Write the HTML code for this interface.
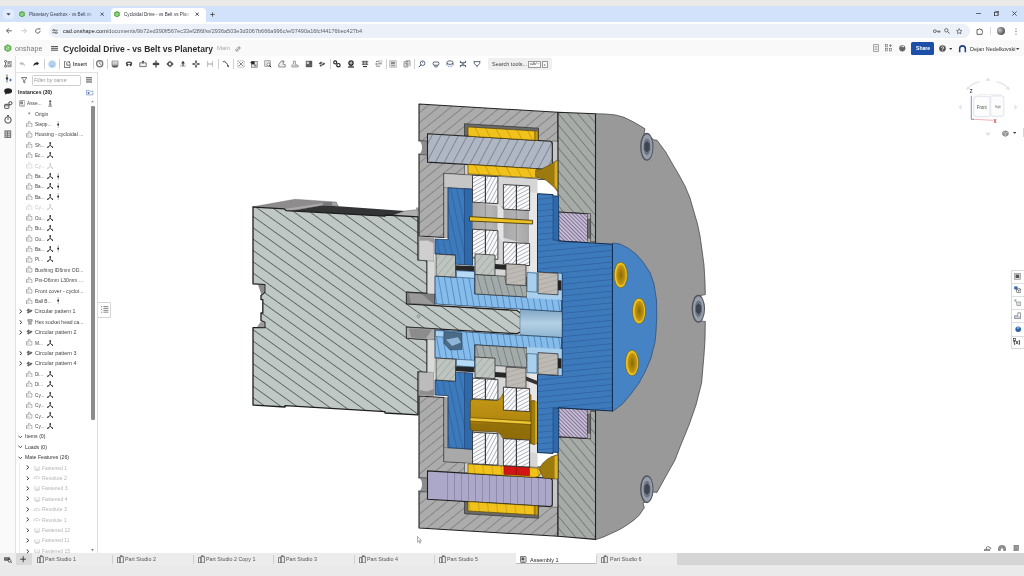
<!DOCTYPE html>
<html><head><meta charset="utf-8">
<style>
*{margin:0;padding:0;box-sizing:border-box}
html,body{width:1024px;height:576px;overflow:hidden;background:#fff;font-family:"Liberation Sans",sans-serif;}
.a{position:absolute}
.t{position:absolute;white-space:nowrap;line-height:1;transform-origin:0 0}
#topstrip{left:0;top:0;width:1024px;height:6px;background:#e4e2df}
#tabstrip{left:0;top:6px;width:1024px;height:16px;background:#d3e2fb}
#addr{left:0;top:22px;width:1024px;height:18px;background:#fff}
#pill{left:49px;top:24px;width:921px;height:14px;border-radius:7px;background:#ebf0f9}
#hdr{left:0;top:40px;width:1024px;height:16px;background:#f7f7f7}
#tool{left:0;top:56px;width:1024px;height:16px;background:#fff}
#side{left:16px;top:72px;width:82px;height:481px;background:#fff;border-right:1px solid #e4e4e4}
#leftcol{left:0;top:56px;width:16px;height:497px;background:#fafafa;border-right:1px solid #e6e6e6}
#bottabs{left:0;top:553px;width:1024px;height:13px;background:#ececec}
#botbar{left:0;top:566px;width:1024px;height:10px;background:#e9e9e9}
.row{position:absolute;left:0;font-size:5.4px;color:#333;white-space:nowrap;line-height:1}
.g{color:#b8b8b8}
</style></head><body>
<div id="canvas" class="a" style="left:0;top:0;width:1024px;height:576px"><svg class="a" style="left:0;top:0" width="1024" height="576" viewBox="0 0 1024 576"><defs><pattern id="hHous" width="7.8" height="7.8" patternUnits="userSpaceOnUse" patternTransform="rotate(-39)"><rect width="7.8" height="7.8" fill="#acacac"/><line x1="0" y1="0" x2="7.8" y2="0" stroke="#6c6c6c" stroke-width="1.2"/></pattern><pattern id="hCov" width="7.4" height="7.4" patternUnits="userSpaceOnUse" patternTransform="rotate(50)"><rect width="7.4" height="7.4" fill="#a7aba8"/><line x1="0" y1="0" x2="7.4" y2="0" stroke="#505450" stroke-width="1.0"/></pattern><pattern id="hMot" width="9.2" height="9.2" patternUnits="userSpaceOnUse" patternTransform="rotate(35.7)"><rect width="9.2" height="9.2" fill="#bfc8c4"/><line x1="0" y1="0" x2="9.2" y2="0" stroke="#565c58" stroke-width="1.7"/></pattern><pattern id="hBlue" width="5.8" height="5.8" patternUnits="userSpaceOnUse" patternTransform="rotate(-5.5)"><rect width="5.8" height="5.8" fill="#3d7abc"/><line x1="0" y1="0" x2="5.8" y2="0" stroke="#24508a" stroke-width="0.9"/></pattern><pattern id="hBlueL" width="6.0" height="6.0" patternUnits="userSpaceOnUse" patternTransform="rotate(78)"><rect width="6.0" height="6.0" fill="#3d7abc"/><line x1="0" y1="0" x2="6.0" y2="0" stroke="#24508a" stroke-width="0.9"/></pattern><pattern id="hLB" width="6.0" height="6.0" patternUnits="userSpaceOnUse" patternTransform="rotate(80)"><rect width="6.0" height="6.0" fill="#86bcec"/><line x1="0" y1="0" x2="6.0" y2="0" stroke="#2f6496" stroke-width="1.0"/></pattern><pattern id="hDa" width="3.4" height="3.4" patternUnits="userSpaceOnUse" patternTransform="rotate(-30)"><rect width="3.4" height="3.4" fill="#fafafa"/><line x1="0" y1="0" x2="3.4" y2="0" stroke="#8890a0" stroke-width="1.2"/></pattern><pattern id="hDb" width="3.4" height="3.4" patternUnits="userSpaceOnUse" patternTransform="rotate(-62)"><rect width="3.4" height="3.4" fill="#fafafa"/><line x1="0" y1="0" x2="3.4" y2="0" stroke="#8890a0" stroke-width="1.2"/></pattern><pattern id="hDc" width="3.4" height="3.4" patternUnits="userSpaceOnUse" patternTransform="rotate(-47)"><rect width="3.4" height="3.4" fill="#fafafa"/><line x1="0" y1="0" x2="3.4" y2="0" stroke="#8890a0" stroke-width="1.2"/></pattern><pattern id="hDd" width="3.4" height="3.4" patternUnits="userSpaceOnUse" patternTransform="rotate(-28)"><rect width="3.4" height="3.4" fill="#fafafa"/><line x1="0" y1="0" x2="3.4" y2="0" stroke="#8890a0" stroke-width="1.2"/></pattern><pattern id="hDisc" width="3.1" height="3.1" patternUnits="userSpaceOnUse" patternTransform="rotate(-62)"><rect width="3.1" height="3.1" fill="#f8f8fa"/><line x1="0" y1="0" x2="3.1" y2="0" stroke="#4a5468" stroke-width="1.0"/></pattern><pattern id="hDisc2" width="3.1" height="3.1" patternUnits="userSpaceOnUse" patternTransform="rotate(-48)"><rect width="3.1" height="3.1" fill="#f8f8fa"/><line x1="0" y1="0" x2="3.1" y2="0" stroke="#4a5468" stroke-width="1.0"/></pattern><pattern id="hPinU" width="7.8" height="7.8" patternUnits="userSpaceOnUse" patternTransform="rotate(-62)"><rect width="7.8" height="7.8" fill="#afb7c5"/><line x1="0" y1="0" x2="7.8" y2="0" stroke="#505868" stroke-width="1.0"/></pattern><pattern id="hPinL" width="7.0" height="7.0" patternUnits="userSpaceOnUse" patternTransform="rotate(90)"><rect width="7.0" height="7.0" fill="#aba8c9"/><line x1="0" y1="0" x2="7.0" y2="0" stroke="#6a6890" stroke-width="0.9"/></pattern><pattern id="hYel" width="9.0" height="9.0" patternUnits="userSpaceOnUse" patternTransform="rotate(62)"><rect width="9.0" height="9.0" fill="#f2c21c"/><line x1="0" y1="0" x2="9.0" y2="0" stroke="#a07c08" stroke-width="0.9"/></pattern><pattern id="hYelL" width="9.0" height="9.0" patternUnits="userSpaceOnUse" patternTransform="rotate(83)"><rect width="9.0" height="9.0" fill="#f2c21c"/><line x1="0" y1="0" x2="9.0" y2="0" stroke="#a88408" stroke-width="0.9"/></pattern><pattern id="hBear" width="2.7" height="2.7" patternUnits="userSpaceOnUse" patternTransform="rotate(45)"><rect width="2.7" height="2.7" fill="#cac0d8"/><line x1="0" y1="0" x2="2.7" y2="0" stroke="#807294" stroke-width="2.0"/></pattern><pattern id="hEcc" width="6.5" height="6.5" patternUnits="userSpaceOnUse" patternTransform="rotate(75)"><rect width="6.5" height="6.5" fill="#a3abaa"/><line x1="0" y1="0" x2="6.5" y2="0" stroke="#505858" stroke-width="0.9"/></pattern><pattern id="hBrg" width="5.5" height="5.5" patternUnits="userSpaceOnUse" patternTransform="rotate(-50)"><rect width="5.5" height="5.5" fill="#bec5c1"/><line x1="0" y1="0" x2="5.5" y2="0" stroke="#868c88" stroke-width="0.8"/></pattern><pattern id="hBrg2" width="4.5" height="4.5" patternUnits="userSpaceOnUse" patternTransform="rotate(-15)"><rect width="4.5" height="4.5" fill="#bebab6"/><line x1="0" y1="0" x2="4.5" y2="0" stroke="#8a8884" stroke-width="0.6"/></pattern><linearGradient id="gGold" x1="0" y1="0" x2="0" y2="1"><stop offset="0" stop-color="#c49a16"/><stop offset="0.35" stop-color="#ba8e12"/><stop offset="0.54" stop-color="#b0860e"/><stop offset="0.62" stop-color="#94700a"/><stop offset="1" stop-color="#8c6a08"/></linearGradient><linearGradient id="gBore" x1="0" y1="0" x2="0" y2="1"><stop offset="0" stop-color="#7fa6c4"/><stop offset="0.5" stop-color="#b4d0e4"/><stop offset="1" stop-color="#8fb4d0"/></linearGradient><linearGradient id="gRoll" x1="0" y1="0" x2="1" y2="0"><stop offset="0" stop-color="#a6a6a6"/><stop offset="0.3" stop-color="#b6b6b6"/><stop offset="0.5" stop-color="#a4a4a4"/><stop offset="0.8" stop-color="#b4b4b4"/><stop offset="1" stop-color="#a6a6a6"/></linearGradient><radialGradient id="gHole" cx="0.5" cy="0.5" r="0.6"><stop offset="0" stop-color="#8a6a08"/><stop offset="0.7" stop-color="#c09410"/><stop offset="1" stop-color="#e0b020"/></radialGradient></defs><polygon points="595.5,113.7 605.0,114.0 615.4,114.9 624.0,117.3 633.6,122.0 640.5,126.0 644.9,128.7 644.0,134.0 650.0,136.0 653.5,139.8 657.0,140.2 665.7,152.0 672.0,163.0 679.0,175.0 685.0,186.0 690.0,198.0 694.0,212.0 697.5,224.0 700.0,236.0 702.0,250.0 704.0,265.0 705.0,282.0 705.3,294.6 700.0,295.6 700.0,321.0 705.3,321.4 705.0,340.0 704.0,355.0 701.6,383.0 696.0,405.0 689.0,425.0 680.0,447.0 675.0,460.0 666.0,476.0 657.0,492.4 653.0,492.0 650.0,500.0 643.0,503.0 644.3,507.7 639.0,515.5 634.0,520.0 628.5,524.0 622.8,527.7 617.0,530.8 610.5,533.8 603.0,537.2 595.5,539.6" fill="#999999" stroke="#3a3a3a" stroke-width="0.7" stroke-linejoin="round"/>
<ellipse cx="646.8" cy="146.8" rx="6.7" ry="14" fill="#4e525a"/>
<ellipse cx="647.0" cy="146.8" rx="5.5" ry="12.5" fill="#989faa"/>
<ellipse cx="647.0" cy="146.8" rx="3.6" ry="8.4" fill="#6c7382"/>
<polygon points="644.4,143.8 647.0,141.2 649.6,143.8 649.6,149.8 647.0,152.4 644.4,149.8" fill="#3e4450"/>
<ellipse cx="698.3" cy="308.8" rx="6.7" ry="14" fill="#4e525a"/>
<ellipse cx="698.5" cy="308.8" rx="5.5" ry="12.5" fill="#989faa"/>
<ellipse cx="698.5" cy="308.8" rx="3.6" ry="8.4" fill="#6c7382"/>
<polygon points="695.9,305.8 698.5,303.2 701.1,305.8 701.1,311.8 698.5,314.4 695.9,311.8" fill="#3e4450"/>
<ellipse cx="646.8" cy="489.2" rx="6.7" ry="14" fill="#4e525a"/>
<ellipse cx="647.0" cy="489.2" rx="5.5" ry="12.5" fill="#989faa"/>
<ellipse cx="647.0" cy="489.2" rx="3.6" ry="8.4" fill="#6c7382"/>
<polygon points="644.4,486.2 647.0,483.6 649.6,486.2 649.6,492.2 647.0,494.8 644.4,492.2" fill="#3e4450"/>
<polygon points="612.4,243.0 620.0,244.0 628.0,248.0 636.0,254.0 643.0,262.0 650.0,272.5 654.0,284.0 656.5,300.0 656.8,316.0 656.0,332.0 655.0,342.0 651.0,358.0 645.0,372.0 639.0,383.0 631.0,394.0 622.5,404.0 612.4,411.6" fill="#4683c4" stroke="#1c3c68" stroke-width="0.6"/>
<ellipse cx="620.7" cy="275.0" rx="6.6" ry="12.8" fill="#f0c41c" stroke="#5a4806" stroke-width="0.5"/>
<ellipse cx="621.0" cy="275.0" rx="4.9" ry="10.6" fill="url(#gHole)"/>
<ellipse cx="639.0" cy="311.0" rx="6.6" ry="12.8" fill="#f0c41c" stroke="#5a4806" stroke-width="0.5"/>
<ellipse cx="639.3" cy="311.0" rx="4.9" ry="10.6" fill="url(#gHole)"/>
<ellipse cx="632.0" cy="363.0" rx="6.6" ry="12.8" fill="#f0c41c" stroke="#5a4806" stroke-width="0.5"/>
<ellipse cx="632.3" cy="363.0" rx="4.9" ry="10.6" fill="url(#gHole)"/>
<polygon points="252.3,206.9 295,199.2 336.2,202 338.3,206.1 322,205.6 288,211.2 284.1,209.3" fill="#8e8c8c" stroke="#555" stroke-width="0.3"/>
<polygon points="285.7,208.8 321.6,203.5 323.2,205.1 287.8,210.8" fill="#acaaaa"/>
<polygon points="323.2,202.2 336.2,202 338.3,206.1 323.4,205.6" fill="#787878"/>
<polygon points="332,202.6 336.2,202.4 338,205.8 332.4,205.6" fill="#a6a6a6"/>
<polygon points="288.8,211.3 322.1,205.6 338.5,206.2 405,211 386,217.8 380,217.4" fill="#333435"/>
<polygon points="386,217.8 405,211 418,209.6 418,217.8" fill="#b0b0b0" stroke="#444" stroke-width="0.4"/>
<polygon points="416,207.5 419,207.5 419,211 416,211" fill="#a0a0a0"/>
<polygon points="253.0,207.0 284.3,208.9 286.0,210.6 385.0,216.2 386.0,215.0 418.0,216.9 418.0,259.9 427.0,260.5 427.0,293.5 406.5,292.2 406.5,303.8 517.0,310.4 520.5,313.1 522.0,318.2 522.0,327.2 520.5,332.1 517.0,333.7 406.5,327.1 406.5,338.2 427.0,339.5 427.0,372.5 418.0,371.9 418.0,414.9 385.0,413.0 385.0,411.6 285.0,405.6 285.0,407.0 253.0,405.0 253.0,327.6 264.8,327.7 264.8,322.4 261.0,320.5 261.0,312.9 262.8,313.0 262.8,299.6 261.0,299.5 261.0,295.5 264.8,292.2 264.8,284.6 253.0,283.9" fill="url(#hMot)" stroke="#1e1e1e" stroke-width="1.3" stroke-linejoin="round" />
<polygon points="258.0,284.7 264.4,285.1 264.4,291.9 261.4,294.5" fill="#8a8a8a" stroke="none" stroke-width="0.6" stroke-linejoin="round" />
<polygon points="261.2,321.1 264.4,322.7 264.4,327.3 257.0,327.1" fill="#9a9a9a" stroke="none" stroke-width="0.6" stroke-linejoin="round" />
<polygon points="406.5,292.2 435.0,294.0 435.0,305.3 406.5,303.6" fill="#7c7c7c" stroke="#222" stroke-width="0.5" stroke-linejoin="round" />
<polygon points="409.0,293.4 422.0,294.2 434.0,304.4 411.0,303.0" fill="#9a9a9a" stroke="none" stroke-width="0.6" stroke-linejoin="round" />
<polygon points="406.5,327.2 435.0,329.0 435.0,340.0 406.5,338.2" fill="#aeaeae" stroke="#222" stroke-width="0.5" stroke-linejoin="round" />
<polygon points="409.0,328.4 432.0,329.8 426.0,338.4 411.0,337.5" fill="#8c8c8c" stroke="none" stroke-width="0.6" stroke-linejoin="round" />
<circle cx="418.5" cy="316.4" r="1.4" fill="none" stroke="#444" stroke-width="0.4"/>
<polygon points="419.0,104.0 558.0,112.3 558.0,180.3 444.0,173.5 444.0,237.5 419.0,236.0" fill="url(#hHous)" stroke="#222" stroke-width="1.1" stroke-linejoin="round" />
<polygon points="419.0,140.5 427.5,141.0 427.5,155.0 419.0,154.5" fill="#8c8c8c" stroke="#222" stroke-width="0.5" stroke-linejoin="round" />
<polygon points="464.5,123.7 538.5,128.2 538.5,140.7 464.5,136.2" fill="#6a6a6a" stroke="#222" stroke-width="0.6" stroke-linejoin="round" />
<polygon points="464.5,164.2 558.0,169.8 558.0,180.3 464.5,174.7" fill="#cfcfcf" stroke="#222" stroke-width="0.5" stroke-linejoin="round" />
<polygon points="552.0,141.0 558.0,141.3 558.0,169.8 552.0,169.5" fill="#c6c6c6" stroke="#222" stroke-width="0.4" stroke-linejoin="round" />
<polygon points="444.0,173.5 472.5,175.2 472.5,189.2 444.0,187.5" fill="#c6c6c6" stroke="#555" stroke-width="0.4" stroke-linejoin="round" />
<polygon points="444.0,187.5 448.0,187.7 448.0,237.7 444.0,237.5" fill="#b4b4b4" stroke="#555" stroke-width="0.4" stroke-linejoin="round" />
<polygon points="419.0,528.0 558.0,536.3 558.0,468.3 444.0,461.5 444.0,397.5 419.0,396.0" fill="url(#hHous)" stroke="#222" stroke-width="1.1" stroke-linejoin="round" />
<polygon points="419.0,491.5 427.5,492.0 427.5,478.0 419.0,477.5" fill="#8c8c8c" stroke="#222" stroke-width="0.5" stroke-linejoin="round" />
<polygon points="464.5,513.7 538.5,518.2 538.5,505.7 464.5,501.2" fill="#6a6a6a" stroke="#222" stroke-width="0.6" stroke-linejoin="round" />
<polygon points="464.5,473.2 558.0,478.8 558.0,468.3 464.5,462.7" fill="#cfcfcf" stroke="#222" stroke-width="0.5" stroke-linejoin="round" />
<polygon points="552.0,507.0 558.0,507.3 558.0,478.8 552.0,478.5" fill="#c6c6c6" stroke="#222" stroke-width="0.4" stroke-linejoin="round" />
<polygon points="444.0,461.5 472.5,463.2 472.5,449.2 444.0,447.5" fill="#a9a9a9" stroke="#555" stroke-width="0.4" stroke-linejoin="round" />
<polygon points="444.0,447.5 448.0,447.7 448.0,397.7 444.0,397.5" fill="#a2a2a2" stroke="#555" stroke-width="0.4" stroke-linejoin="round" />
<ellipse cx="418.8" cy="147.5" rx="3.2" ry="6.2" fill="#fff"/>
<ellipse cx="418.8" cy="484.5" rx="3.2" ry="6.2" fill="#fff"/>
<polygon points="419.0,237.0 434.0,237.9 434.0,261.4 427.0,261.0 427.0,260.5 419.0,260.0" fill="#cfcfcf" stroke="#555" stroke-width="0.4" stroke-linejoin="round" />
<polygon points="419.0,395.0 434.0,395.9 434.0,372.4 427.0,372.0 427.0,372.5 419.0,372.0" fill="#bcbcbc" stroke="#555" stroke-width="0.4" stroke-linejoin="round" />
<polygon points="419.4,237.3 434.0,238.2 434.0,243.4 428.0,240.5 419.4,240.8" fill="#9c9c9c" stroke="none" stroke-width="0.6" stroke-linejoin="round" />
<polygon points="419.4,394.7 434.0,395.6 434.0,388.9 427.0,391.5 419.4,390.0" fill="#8e8e8e" stroke="none" stroke-width="0.6" stroke-linejoin="round" />
<polygon points="427.5,261.0 434.5,261.4 434.5,293.9 427.5,293.5" fill="#d9d9d9" stroke="#777" stroke-width="0.3" stroke-linejoin="round" />
<polygon points="427.5,372.0 434.5,372.4 434.5,339.9 427.5,339.5" fill="#d9d9d9" stroke="#777" stroke-width="0.3" stroke-linejoin="round" />
<polygon points="558.0,112.3 595.5,113.8 595.5,242.1 590.5,241.8 590.5,214.0 558.0,212.0" fill="url(#hCov)" stroke="#222" stroke-width="1.1" stroke-linejoin="round" />
<polygon points="558.7,212.1 587.5,213.8 587.5,242.7 558.7,241.0" fill="url(#hBear)" stroke="#222" stroke-width="0.9" stroke-linejoin="round" />
<polygon points="587.5,213.8 590.5,214.0 590.5,242.9 587.5,242.7" fill="#a7aba8" stroke="none" stroke-width="0.6" stroke-linejoin="round" />
<polygon points="587.5,219.1 590.5,219.3 590.5,238.3 587.5,238.1" fill="#6c6c6c" stroke="#222" stroke-width="0.4" stroke-linejoin="round" />
<polygon points="558.0,536.3 595.5,539.4 595.5,411.1 590.5,410.8 590.5,438.6 558.0,436.6" fill="url(#hCov)" stroke="#222" stroke-width="1.1" stroke-linejoin="round" />
<polygon points="558.7,436.7 587.5,438.4 587.5,409.5 558.7,407.8" fill="url(#hBear)" stroke="#222" stroke-width="0.9" stroke-linejoin="round" />
<polygon points="587.5,438.4 590.5,438.6 590.5,409.7 587.5,409.5" fill="#a7aba8" stroke="none" stroke-width="0.6" stroke-linejoin="round" />
<polygon points="587.5,433.1 590.5,433.3 590.5,414.3 587.5,414.1" fill="#6c6c6c" stroke="#222" stroke-width="0.4" stroke-linejoin="round" />
<polygon points="472.5,175.2 537.5,179.1 537.5,279.1 472.5,275.2" fill="#d6d6d6" stroke="none" stroke-width="0.6" stroke-linejoin="round" />
<polygon points="472.5,463.2 537.5,467.1 537.5,367.1 472.5,363.2" fill="#d6d6d6" stroke="none" stroke-width="0.6" stroke-linejoin="round" />
<polygon points="529.0,192.6 537.5,193.1 537.5,279.1 529.0,278.6" fill="#e6e6e6" stroke="none" stroke-width="0.6" stroke-linejoin="round" />
<polygon points="529.0,452.6 537.5,453.1 537.5,367.1 529.0,366.6" fill="#e6e6e6" stroke="none" stroke-width="0.6" stroke-linejoin="round" />
<polygon points="537.5,193.7 553.0,194.6 553.0,196.0 558.0,196.3 558.0,240.9 612.4,244.2 612.4,411.0 558.0,407.7 558.0,452.3 553.0,452.0 553.0,453.4 537.5,452.5 537.5,374.1 562.0,375.6 562.0,273.6 537.5,272.1" fill="url(#hBlue)" stroke="#10294a" stroke-width="1.0" stroke-linejoin="round" />
<polygon points="553.0,196.0 558.6,196.4 558.6,240.4 553.0,240.0" fill="#2f69aa" stroke="#10294a" stroke-width="0.4" stroke-linejoin="round" />
<polygon points="553.0,452.0 558.6,452.4 558.6,408.4 553.0,408.0" fill="#2f69aa" stroke="#10294a" stroke-width="0.4" stroke-linejoin="round" />
<polygon points="427.5,133.8 550.5,141.2 552.3,143.0 552.3,168.0 550.5,169.5 427.5,162.1" fill="url(#hPinU)" stroke="#222" stroke-width="1.1" stroke-linejoin="round" />
<polygon points="427.5,499.2 550.5,506.6 552.3,505.0 552.3,480.0 550.5,478.3 427.5,470.9" fill="url(#hPinL)" stroke="#222" stroke-width="1.1" stroke-linejoin="round" />
<polygon points="468.0,126.9 535.0,131.0 535.0,140.3 468.0,136.2" fill="url(#hYel)" stroke="#4a3a04" stroke-width="0.6" stroke-linejoin="round" />
<polygon points="535.0,131.0 538.0,131.1 538.0,140.4 535.0,140.3" fill="#c79a10" stroke="#4a3a04" stroke-width="0.4" stroke-linejoin="round" />
<polygon points="468.0,164.5 535.0,168.6 539.0,170.2 541.0,174.3 538.0,178.1 468.0,173.9" fill="url(#hYel)" stroke="#4a3a04" stroke-width="0.6" stroke-linejoin="round" />
<polygon points="468.0,510.9 535.0,515.0 535.0,505.7 468.0,501.6" fill="url(#hYelL)" stroke="#4a3a04" stroke-width="0.6" stroke-linejoin="round" />
<polygon points="535.0,515.0 538.0,515.1 538.0,505.8 535.0,505.7" fill="#c79a10" stroke="#4a3a04" stroke-width="0.4" stroke-linejoin="round" />
<polygon points="468.0,473.3 535.0,477.4 539.0,476.2 541.0,472.3 538.0,468.1 468.0,463.9" fill="url(#hYelL)" stroke="#4a3a04" stroke-width="0.6" stroke-linejoin="round" />
<polygon points="535.6,170.5 540.8,169.3 549.0,165.3 557.6,160.1 557.6,191.7 554.4,187.5 546.0,180.2 535.6,176.5" fill="#9c7a10" stroke="#4a3a04" stroke-width="0.5" stroke-linejoin="round" />
<polygon points="554.6,162.6 557.4,160.7 557.4,189.3 554.6,185.6" fill="#d8b024" stroke="none" stroke-width="0.6" stroke-linejoin="round" />
<path d="M558 454.6 Q546 457 539.3 468.1 L541 473 L543.5 478 L558 479 Z" fill="#9c7a10" stroke="#4a3a04" stroke-width="0.5"/>
<path d="M557.6 455.2 L554.6 456.4 L554.6 478.4 L557.6 478.6 Z" fill="#dcb428"/>
<polygon points="503.9,465.9 516.4,466.6 516.4,475.0 503.9,474.3" fill="#d41414" stroke="#6a0808" stroke-width="0.5" stroke-linejoin="round" />
<polygon points="516.4,466.6 529.4,467.4 529.4,475.8 516.4,475.0" fill="#d41414" stroke="#6a0808" stroke-width="0.5" stroke-linejoin="round" />
<polygon points="448.0,187.7 472.5,189.2 472.5,265.2 455.5,264.2 455.5,255.2 435.0,254.0 435.0,239.0 448.0,239.7" fill="url(#hBlueL)" stroke="#10294a" stroke-width="0.7" stroke-linejoin="round" />
<polygon points="464.5,188.7 472.5,189.2 472.5,265.2 464.5,264.7" fill="#2f69aa" stroke="#10294a" stroke-width="0.4" stroke-linejoin="round" />
<polygon points="448.0,447.7 472.5,449.2 472.5,373.2 455.5,372.2 455.5,381.2 435.0,380.0 435.0,395.0 448.0,395.7" fill="url(#hBlueL)" stroke="#10294a" stroke-width="0.7" stroke-linejoin="round" />
<polygon points="464.5,448.7 472.5,449.2 472.5,373.2 464.5,372.7" fill="#2f69aa" stroke="#10294a" stroke-width="0.4" stroke-linejoin="round" />
<polygon points="472.5,202.2 529.0,210.6 529.0,244.6 472.5,229.2" fill="url(#gRoll)" stroke="none" stroke-width="0.6" stroke-linejoin="round" />
<polygon points="497.5,203.7 503.5,209.1 503.5,243.1 497.5,234.7" fill="#e4e4e4" stroke="none" stroke-width="0.6" stroke-linejoin="round" />
<polygon points="485.4,203.0 485.4,232.0" fill="none" stroke="#808080" stroke-width="0.4" stroke-linejoin="round" />
<polygon points="516.4,209.8 516.4,241.8" fill="none" stroke="#808080" stroke-width="0.4" stroke-linejoin="round" />
<polygon points="469.5,216.6 532.6,220.4 532.6,224.0 469.5,221.0" fill="#ecc020" stroke="#3a2c02" stroke-width="0.8" stroke-linejoin="round" />
<path d="M470.4 402 Q470 399.5 473 399.4 L496 400.4 Q500.5 400 503 393.4 L531 394.8 L531 443.4 L503 438.6 Q500.5 432.4 496 431.8 L473 430.9 Q470.2 430.6 470.3 428 Z" fill="url(#gGold)" stroke="#4a3804" stroke-width="0.6"/>
<path d="M470.6 418 L531 421.6 L531 424.2 L470.6 420.8 Z" fill="#ecc634"/>
<path d="M470.6 417.6 L531 421.2" stroke="#5a4404" stroke-width="0.5" fill="none"/>
<path d="M470.6 421.1 L531 424.5" stroke="#5a4404" stroke-width="0.5" fill="none"/>
<path d="M531 401 Q534 399 537 402.4 L537 443.2 Q534 446 531 443.4 Z" fill="#a07c0c" stroke="#4a3804" stroke-width="0.5"/>
<path d="M535.2 400.8 L537 402.6 L537 443 L535.2 444.4 Z" fill="#d8b028"/>
<polygon points="472.5,175.2 485.4,176.0 485.4,203.0 472.5,202.2" fill="url(#hDa)" stroke="none" stroke-width="0.6" stroke-linejoin="round" />
<polygon points="485.4,176.0 497.9,176.7 497.9,203.7 485.4,203.0" fill="url(#hDb)" stroke="none" stroke-width="0.6" stroke-linejoin="round" />
<polygon points="472.5,175.2 497.9,176.7 497.9,203.7 472.5,202.2" fill="none" stroke="#2a2a2a" stroke-width="0.85" stroke-linejoin="round" />
<polygon points="485.4,176.0 485.4,203.0" fill="none" stroke="#2a2a2a" stroke-width="0.8" stroke-linejoin="round" />
<polygon points="472.5,229.2 485.4,230.0 485.4,258.6 472.5,257.8" fill="url(#hDa)" stroke="none" stroke-width="0.6" stroke-linejoin="round" />
<polygon points="485.4,230.0 497.9,230.7 497.9,259.3 485.4,258.6" fill="url(#hDb)" stroke="none" stroke-width="0.6" stroke-linejoin="round" />
<polygon points="472.5,229.2 497.9,230.7 497.9,259.3 472.5,257.8" fill="none" stroke="#2a2a2a" stroke-width="0.85" stroke-linejoin="round" />
<polygon points="485.4,230.0 485.4,258.6" fill="none" stroke="#2a2a2a" stroke-width="0.8" stroke-linejoin="round" />
<polygon points="472.5,378.2 485.4,379.0 485.4,399.5 472.5,398.7" fill="url(#hDa)" stroke="none" stroke-width="0.6" stroke-linejoin="round" />
<polygon points="485.4,379.0 497.9,379.7 497.9,400.2 485.4,399.5" fill="url(#hDb)" stroke="none" stroke-width="0.6" stroke-linejoin="round" />
<polygon points="472.5,378.2 497.9,379.7 497.9,400.2 472.5,398.7" fill="none" stroke="#2a2a2a" stroke-width="0.85" stroke-linejoin="round" />
<polygon points="485.4,379.0 485.4,399.5" fill="none" stroke="#2a2a2a" stroke-width="0.8" stroke-linejoin="round" />
<polygon points="472.5,432.2 485.4,433.0 485.4,464.5 472.5,463.7" fill="url(#hDa)" stroke="none" stroke-width="0.6" stroke-linejoin="round" />
<polygon points="485.4,433.0 497.9,433.7 497.9,465.2 485.4,464.5" fill="url(#hDb)" stroke="none" stroke-width="0.6" stroke-linejoin="round" />
<polygon points="472.5,432.2 497.9,433.7 497.9,465.2 472.5,463.7" fill="none" stroke="#2a2a2a" stroke-width="0.85" stroke-linejoin="round" />
<polygon points="485.4,433.0 485.4,464.5" fill="none" stroke="#2a2a2a" stroke-width="0.8" stroke-linejoin="round" />
<polygon points="503.4,184.5 516.4,185.2 516.4,209.8 503.4,209.1" fill="url(#hDc)" stroke="none" stroke-width="0.6" stroke-linejoin="round" />
<polygon points="516.4,185.2 529.6,186.0 529.6,210.6 516.4,209.8" fill="url(#hDd)" stroke="none" stroke-width="0.6" stroke-linejoin="round" />
<polygon points="503.4,184.5 529.6,186.0 529.6,210.6 503.4,209.1" fill="none" stroke="#2a2a2a" stroke-width="0.85" stroke-linejoin="round" />
<polygon points="516.4,185.2 516.4,209.8" fill="none" stroke="#2a2a2a" stroke-width="0.8" stroke-linejoin="round" />
<polygon points="503.4,242.1 516.4,242.8 516.4,264.8 503.4,264.1" fill="url(#hDc)" stroke="none" stroke-width="0.6" stroke-linejoin="round" />
<polygon points="516.4,242.8 529.6,243.6 529.6,265.6 516.4,264.8" fill="url(#hDd)" stroke="none" stroke-width="0.6" stroke-linejoin="round" />
<polygon points="503.4,242.1 529.6,243.6 529.6,265.6 503.4,264.1" fill="none" stroke="#2a2a2a" stroke-width="0.85" stroke-linejoin="round" />
<polygon points="516.4,242.8 516.4,264.8" fill="none" stroke="#2a2a2a" stroke-width="0.8" stroke-linejoin="round" />
<polygon points="503.4,387.1 516.4,387.8 516.4,410.8 503.4,410.1" fill="url(#hDc)" stroke="none" stroke-width="0.6" stroke-linejoin="round" />
<polygon points="516.4,387.8 529.6,388.6 529.6,411.6 516.4,410.8" fill="url(#hDd)" stroke="none" stroke-width="0.6" stroke-linejoin="round" />
<polygon points="503.4,387.1 529.6,388.6 529.6,411.6 503.4,410.1" fill="none" stroke="#2a2a2a" stroke-width="0.85" stroke-linejoin="round" />
<polygon points="516.4,387.8 516.4,410.8" fill="none" stroke="#2a2a2a" stroke-width="0.8" stroke-linejoin="round" />
<polygon points="503.4,438.6 516.4,439.3 516.4,466.3 503.4,465.6" fill="url(#hDc)" stroke="none" stroke-width="0.6" stroke-linejoin="round" />
<polygon points="516.4,439.3 529.6,440.1 529.6,467.1 516.4,466.3" fill="url(#hDd)" stroke="none" stroke-width="0.6" stroke-linejoin="round" />
<polygon points="503.4,438.6 529.6,440.1 529.6,467.1 503.4,465.6" fill="none" stroke="#2a2a2a" stroke-width="0.85" stroke-linejoin="round" />
<polygon points="516.4,439.3 516.4,466.3" fill="none" stroke="#2a2a2a" stroke-width="0.8" stroke-linejoin="round" />
<polygon points="520.0,309.1 562.0,311.6 562.0,337.6 520.0,335.1" fill="url(#gBore)" stroke="#2a4a6a" stroke-width="0.4" stroke-linejoin="round" />
<polygon points="435.0,276.0 457.0,277.3 457.0,270.3 474.5,271.3 474.5,293.8 558.0,298.8 561.5,300.6 561.5,311.6 435.0,304.0" fill="url(#hLB)" stroke="#123050" stroke-width="0.7" stroke-linejoin="round" />
<polygon points="435.0,358.0 457.0,359.3 457.0,366.3 474.5,367.3 474.5,344.8 558.0,349.8 561.5,348.6 561.5,337.6 435.0,330.0" fill="url(#hLB)" stroke="#123050" stroke-width="0.7" stroke-linejoin="round" />
<polygon points="435.5,330.5 444.0,331.0 444.0,337.0 435.5,336.5" fill="#a8d2f4" stroke="#123050" stroke-width="0.4" stroke-linejoin="round" />
<polygon points="444.0,331.5 462.0,333.1 462.0,349.6 450.0,349.9 444.0,343.5" fill="#4a6a86" stroke="#123050" stroke-width="0.4" stroke-linejoin="round" />
<polygon points="446.0,339.6 458.0,337.3 461.0,342.5 452.0,346.0" fill="#8fb6d6" stroke="none" stroke-width="0.6" stroke-linejoin="round" />
<polygon points="475.0,274.4 527.0,277.5 527.0,297.0 475.0,293.9" fill="url(#hEcc)" stroke="#222" stroke-width="0.6" stroke-linejoin="round" />
<polygon points="475.0,364.4 527.0,367.5 527.0,348.0 475.0,344.9" fill="url(#hEcc)" stroke="#222" stroke-width="0.6" stroke-linejoin="round" />
<polygon points="527.0,271.5 561.5,273.6 561.5,300.1 527.0,298.0" fill="#a8d0ee" stroke="none" stroke-width="0.6" stroke-linejoin="round" />
<polygon points="527.0,373.5 561.5,375.6 561.5,349.1 527.0,347.0" fill="#a8d0ee" stroke="none" stroke-width="0.6" stroke-linejoin="round" />
<polygon points="475.0,253.8 495.0,255.0 495.0,275.6 475.0,274.4" fill="url(#hBrg)" stroke="#222" stroke-width="0.7" stroke-linejoin="round" />
<polygon points="506.0,263.7 526.0,264.9 526.0,285.7 506.0,284.5" fill="url(#hBrg2)" stroke="#222" stroke-width="0.7" stroke-linejoin="round" />
<polygon points="495.0,264.1 506.0,264.7 506.0,269.7 495.0,269.1" fill="#262626" stroke="none" stroke-width="0.6" stroke-linejoin="round" />
<polygon points="475.0,357.0 495.0,358.2 495.0,378.6 475.0,377.4" fill="url(#hBrg)" stroke="#222" stroke-width="0.7" stroke-linejoin="round" />
<polygon points="506.0,367.0 526.0,368.2 526.0,388.4 506.0,387.2" fill="url(#hBrg2)" stroke="#222" stroke-width="0.7" stroke-linejoin="round" />
<polygon points="495.0,372.1 506.0,372.7 506.0,377.7 495.0,377.1" fill="#262626" stroke="none" stroke-width="0.6" stroke-linejoin="round" />
<polygon points="526.0,376.4 537.5,381.1 537.5,385.1 526.0,380.4" fill="#333" stroke="none" stroke-width="0.6" stroke-linejoin="round" />
<polygon points="436.0,254.0 455.5,255.2 455.5,277.2 436.0,276.0" fill="url(#hBrg)" stroke="#222" stroke-width="0.7" stroke-linejoin="round" />
<polygon points="436.0,380.0 455.5,381.2 455.5,359.2 436.0,358.0" fill="url(#hBrg)" stroke="#222" stroke-width="0.7" stroke-linejoin="round" />
<polygon points="455.5,265.2 474.5,266.3 474.5,271.3 455.5,270.2" fill="#262626" stroke="none" stroke-width="0.6" stroke-linejoin="round" />
<polygon points="455.5,371.2 474.5,372.3 474.5,367.3 455.5,366.2" fill="#262626" stroke="none" stroke-width="0.6" stroke-linejoin="round" />
<polygon points="456.5,270.6 474.5,271.6 474.5,278.3 456.5,277.2" fill="#b4daf6" stroke="#123050" stroke-width="0.5" stroke-linejoin="round" />
<polygon points="456.5,365.9 474.5,367.0 474.5,360.3 456.5,359.2" fill="#b4daf6" stroke="#123050" stroke-width="0.5" stroke-linejoin="round" />
<polygon points="538.0,272.1 558.0,273.3 558.0,294.8 538.0,293.6" fill="url(#hBrg2)" stroke="#222" stroke-width="0.7" stroke-linejoin="round" />
<polygon points="538.0,374.1 558.0,375.3 558.0,353.8 538.0,352.6" fill="url(#hBrg2)" stroke="#222" stroke-width="0.7" stroke-linejoin="round" />
<polygon points="527.0,272.5 537.0,273.1 537.0,292.1 527.0,291.5" fill="#a8d0ee" stroke="#123050" stroke-width="0.5" stroke-linejoin="round" />
<polygon points="527.0,372.5 537.0,373.1 537.0,354.1 527.0,353.5" fill="#a8d0ee" stroke="#123050" stroke-width="0.5" stroke-linejoin="round" />
<polygon points="558.0,280.3 561.5,280.6 561.5,290.6 558.0,290.3" fill="#222" stroke="none" stroke-width="0.6" stroke-linejoin="round" />
<polygon points="558.0,368.3 561.5,368.6 561.5,358.6 558.0,358.3" fill="#222" stroke="none" stroke-width="0.6" stroke-linejoin="round" /></svg></div><div class="a" style="left:0;top:0;width:1024px;height:576px;will-change:transform"><div class="a" style="left:0;top:0;width:1024px;height:6px;background:#ebeae8"></div>
<div class="a" style="left:0;top:6px;width:1024px;height:16px;background:#d3e2fb"></div>
<div class="a" style="left:0;top:22px;width:1024px;height:18px;background:#fff"></div>
<div class="a" style="left:49px;top:24px;width:921px;height:14px;border-radius:7px;background:#ebf0f9"></div>
<div class="a" style="left:0;top:40px;width:1024px;height:16px;background:#f9f9f9"></div>
<div class="a" style="left:0;top:56px;width:1024px;height:15.5px;background:#fff"></div>
<div class="a" style="left:0;top:56px;width:15.5px;height:498px;background:#fafafa;border-right:0.5px solid #e0e0e0"></div>
<div class="a" style="left:16px;top:71.5px;width:82.3px;height:482.5px;background:#fff;border-right:0.6px solid #dcdcdc;border-top:0.5px solid #e4e4e4"></div>
<div class="a" style="left:3px;top:9px;width:10.5px;height:10px;border-radius:4px;background:#e3ecfc"></div>
<svg class="a" style="left:5.5px;top:12.5px" width="5.0" height="3.0" viewBox="0 0 5 3"><path d="M0.3 0.3 L2.5 2.4 L4.7 0.3 Z" fill="#444"/></svg>
<div class="a" style="left:110.5px;top:8px;width:95px;height:14px;border-radius:4px 4px 0 0;background:#fff"></div>
<svg class="a" style="left:19.2px;top:10.8px" width="6.0" height="6.4" viewBox="0 0 6 6.4"><path d="M3 0 L5.8 1.6 L5.8 4.8 L3 6.4 L0.2 4.8 L0.2 1.6 Z" fill="#4fa83d"/><path d="M1.6 2.2 L3 1.4 L4.4 2.2 L4.4 4.2 L3 5 L1.6 4.2 Z" fill="#d8efd0"/><path d="M3 1.4V5M1.6 2.2L4.4 4.2" stroke="#4fa83d" stroke-width="0.5"/></svg>
<div class="t" style="left:29.0px;top:12.1px;font-size:5.00px;color:#3a4252;font-weight:normal;transform:scaleX(0.9255);">Planetary Gearbox - vs Belt vs</div>
<div class="a" style="left:86px;top:9px;width:10px;height:11px;background:linear-gradient(90deg,rgba(211,226,251,0),#d3e2fb)"></div>
<svg class="a" style="left:99.8px;top:12.0px" width="4.4" height="4.4" viewBox="0 0 4.4 4.4"><path d="M0.6 0.6L3.8 3.8M3.8 0.6L0.6 3.8" stroke="#333" stroke-width="0.8"/></svg>
<svg class="a" style="left:114.3px;top:10.8px" width="6.0" height="6.4" viewBox="0 0 6 6.4"><path d="M3 0 L5.8 1.6 L5.8 4.8 L3 6.4 L0.2 4.8 L0.2 1.6 Z" fill="#4fa83d"/><path d="M1.6 2.2 L3 1.4 L4.4 2.2 L4.4 4.2 L3 5 L1.6 4.2 Z" fill="#d8efd0"/><path d="M3 1.4V5M1.6 2.2L4.4 4.2" stroke="#4fa83d" stroke-width="0.5"/></svg>
<div class="t" style="left:124.0px;top:12.1px;font-size:5.00px;color:#30343c;font-weight:normal;transform:scaleX(0.9210);">Cycloidal Drive - vs Belt vs Plan</div>
<div class="a" style="left:183px;top:9px;width:9px;height:11px;background:linear-gradient(90deg,rgba(255,255,255,0),#fff)"></div>
<svg class="a" style="left:194.8px;top:12.0px" width="4.4" height="4.4" viewBox="0 0 4.4 4.4"><path d="M0.6 0.6L3.8 3.8M3.8 0.6L0.6 3.8" stroke="#222" stroke-width="0.8"/></svg>
<svg class="a" style="left:209.5px;top:11.5px" width="5.0" height="5.0" viewBox="0 0 5 5"><path d="M2.5 0.3V4.7M0.3 2.5H4.7" stroke="#444" stroke-width="0.8"/></svg>
<svg class="a" style="left:975.6px;top:13.2px" width="5.0" height="1.2" viewBox="0 0 5 1.2"><path d="M0 0.6H5" stroke="#333" stroke-width="0.8"/></svg>
<svg class="a" style="left:993.6px;top:10.6px" width="5.4" height="5.4" viewBox="0 0 5.4 5.4"><rect x="0.4" y="1.2" width="3.6" height="3.6" fill="none" stroke="#333" stroke-width="0.8"/><path d="M1.4 0.4H5V4" fill="none" stroke="#333" stroke-width="0.7"/></svg>
<svg class="a" style="left:1012.0px;top:10.8px" width="5.0" height="5.0" viewBox="0 0 5 5"><path d="M0.4 0.4L4.6 4.6M4.6 0.4L0.4 4.6" stroke="#333" stroke-width="0.8"/></svg>
<svg class="a" style="left:5.8px;top:28.2px" width="6.0" height="5.6" viewBox="0 0 6 5.6"><path d="M3 0.4L0.5 2.8L3 5.2M0.6 2.8H5.8" fill="none" stroke="#555" stroke-width="0.9"/></svg>
<svg class="a" style="left:20.5px;top:28.2px" width="6.0" height="5.6" viewBox="0 0 6 5.6"><path d="M3 0.4L5.5 2.8L3 5.2M5.4 2.8H0.2" fill="none" stroke="#c4c4c4" stroke-width="0.9"/></svg>
<svg class="a" style="left:34.5px;top:28.0px" width="6.0" height="6.0" viewBox="0 0 6 6"><path d="M5 3A2.2 2.2 0 1 1 4.2 1.3" fill="none" stroke="#555" stroke-width="0.9"/><path d="M3.6 0.2L5.4 0.4L5.2 2.2Z" fill="#555"/></svg>
<svg class="a" style="left:52.0px;top:28.6px" width="6.0" height="5.0" viewBox="0 0 6 5"><path d="M0.3 1.3H5.7M0.3 3.7H5.7" stroke="#444" stroke-width="0.7"/><circle cx="1.8" cy="1.3" r="0.9" fill="#ebf0f9" stroke="#444" stroke-width="0.6"/><circle cx="4.2" cy="3.7" r="0.9" fill="#ebf0f9" stroke="#444" stroke-width="0.6"/></svg>
<div class="t" style="left:63.0px;top:28.8px;font-size:5.60px;color:#5a5e66;font-weight:normal;transform:scaleX(0.9923);"><span style="color:#222">cad.onshape.com</span>/documents/9b72ed390ff567ec33ef286f/w/2936a503e3d3067b666a996c/e/07490a16fcf44176bec427b4</div>
<svg class="a" style="left:933.0px;top:29.0px" width="8.0" height="4.4" viewBox="0 0 8 4.4"><circle cx="1.8" cy="2.2" r="1.4" fill="none" stroke="#555" stroke-width="0.8"/><path d="M3.2 2.2H7.4M5.4 2.2V3.8M6.8 2.2V3.6" stroke="#555" stroke-width="0.8" fill="none"/></svg>
<svg class="a" style="left:944.0px;top:28.2px" width="6.0" height="6.0" viewBox="0 0 6 6"><circle cx="2.3" cy="2.3" r="1.7" fill="none" stroke="#555" stroke-width="0.8"/><path d="M3.6 3.6L5.6 5.6" stroke="#555" stroke-width="0.9"/></svg>
<svg class="a" style="left:955.5px;top:27.8px" width="6.4" height="6.4" viewBox="0 0 6.4 6.4"><path d="M3.2 0.6L4 2.4L5.9 2.6L4.5 3.9L4.9 5.8L3.2 4.8L1.5 5.8L1.9 3.9L0.5 2.6L2.4 2.4Z" fill="none" stroke="#555" stroke-width="0.7"/></svg>
<svg class="a" style="left:975.5px;top:27.6px" width="7.0" height="7.0" viewBox="0 0 7 7"><path d="M1 1.6H2.6A0.9 0.9 0 0 1 4.4 1.6H6V3.2A0.9 0.9 0 0 1 6 5V6.4H1Z" fill="none" stroke="#444" stroke-width="0.8"/></svg>
<div class="a" style="left:989.5px;top:27px;width:0.6px;height:8px;background:#d4dae6"></div>
<div class="a" style="left:996.5px;top:27px;width:8px;height:8px;border-radius:4px;background:radial-gradient(circle at 35% 40%,#c8c8cc 0,#6a6a70 55%,#3a3a40 100%)"></div>
<svg class="a" style="left:1014.6px;top:27.6px" width="2.0" height="7.0" viewBox="0 0 2 7"><circle cx="1" cy="1" r="0.6" fill="#444"/><circle cx="1" cy="3.5" r="0.6" fill="#444"/><circle cx="1" cy="6" r="0.6" fill="#444"/></svg>
<svg class="a" style="left:4.3px;top:44.2px" width="7.6" height="8.2" viewBox="0 0 7.6 8.2"><path d="M3.8 0.2L7.3 2.2L7.3 6L3.8 8L0.3 6L0.3 2.2Z" fill="#5cb04a"/><path d="M2.2 2.8L3.8 1.9L5.4 2.8L5.4 5.4L3.8 6.3L2.2 5.4Z" fill="#e4f4de"/><path d="M3.8 1.9V6.3M2.2 3.4L5.4 4.8" stroke="#5cb04a" stroke-width="0.7"/></svg>
<div class="t" style="left:14.8px;top:44.9px;font-size:7.20px;color:#777;font-weight:normal;letter-spacing:0.1px;transform:scaleX(0.9724);">onshape</div>
<svg class="a" style="left:51.0px;top:45.6px" width="7.2" height="5.6" viewBox="0 0 7.2 5.6"><path d="M0 0.7H7.2M0 2.8H7.2M0 4.9H7.2" stroke="#333" stroke-width="1"/></svg>
<div class="t" style="left:63.0px;top:44.8px;font-size:8.40px;color:#2c2c2c;font-weight:bold;transform:scaleX(1.0196);">Cycloidal Drive - vs Belt vs Planetary</div>
<div class="t" style="left:217.0px;top:47.4px;font-size:4.80px;color:#aaa;font-weight:normal;transform:scaleX(1.2492);">Main</div>
<svg class="a" style="left:234.5px;top:45.5px" width="6.0" height="6.0" viewBox="0 0 6 6"><path d="M2.2 3.8L3.8 2.2M2.6 1.8L3.4 1A1.2 1.2 0 0 1 5 2.6L4.2 3.4M3.4 4.2L2.6 5A1.2 1.2 0 0 1 1 3.4L1.8 2.6" fill="none" stroke="#555" stroke-width="0.7"/></svg>
<svg class="a" style="left:872.6px;top:44.2px" width="6.0" height="8.0" viewBox="0 0 6 8"><rect x="0.4" y="0.4" width="5.2" height="7.2" rx="0.6" fill="none" stroke="#777" stroke-width="0.7"/><path d="M1.5 2.4H4.5M1.5 4H4.5M1.5 5.6H4.5" stroke="#777" stroke-width="0.6"/></svg>
<svg class="a" style="left:885.4px;top:44.4px" width="7.2" height="7.4" viewBox="0 0 7.2 7.4"><rect x="0.3" y="0.3" width="2.4" height="2.6" fill="none" stroke="#666" stroke-width="0.6"/><rect x="0.3" y="4.3" width="2.4" height="2.6" fill="none" stroke="#666" stroke-width="0.6"/><rect x="4.3" y="4.3" width="2.4" height="2.6" fill="none" stroke="#666" stroke-width="0.6"/><path d="M5.5 0.2V3M4.1 1.6H6.9" stroke="#666" stroke-width="0.7"/></svg>
<svg class="a" style="left:899.2px;top:45.0px" width="6.6" height="6.6" viewBox="0 0 6.6 6.6"><circle cx="3.3" cy="3.3" r="3.1" fill="#666"/><path d="M1.6 3.6A1.6 1.4 0 0 1 4.4 2.4L5.2 1.4A2 2 0 0 0 2 2Z" fill="#e8e8e8"/></svg>
<div class="a" style="left:911px;top:42px;width:23px;height:13px;border-radius:1.5px;background:#1b4fa8"></div>
<div class="t" style="left:915.6px;top:46.3px;font-size:5.80px;color:#fff;font-weight:bold;transform:scaleX(0.8806);">Share</div>
<svg class="a" style="left:939.2px;top:44.8px" width="7.0" height="7.0" viewBox="0 0 7 7"><circle cx="3.5" cy="3.5" r="3.3" fill="#555"/><path d="M2.4 2.8A1.1 1.1 0 1 1 3.5 3.9V4.5" fill="none" stroke="#fff" stroke-width="0.8"/><circle cx="3.5" cy="5.5" r="0.45" fill="#fff"/></svg>
<svg class="a" style="left:949.0px;top:47.6px" width="3.4" height="2.0" viewBox="0 0 3.4 2"><path d="M0 0H3.4L1.7 2Z" fill="#444"/></svg>
<svg class="a" style="left:958.0px;top:44.2px" width="9.0" height="8.4" viewBox="0 0 9 8.4"><path d="M0.9 8.2V4.5A3.6 3.6 0 0 1 8.1 4.5V8.2H6.6V4.8A2.1 2.1 0 0 0 2.4 4.8V8.2Z" fill="#1f3f86"/></svg>
<div class="t" style="left:969.8px;top:46.5px;font-size:5.30px;color:#333;font-weight:normal;transform:scaleX(1.0348);">Dejan Nedelkovski</div>
<svg class="a" style="left:1016.2px;top:47.6px" width="3.4" height="2.0" viewBox="0 0 3.4 2"><path d="M0 0H3.4L1.7 2Z" fill="#444"/></svg>
<div class="a" style="left:44.3px;top:59px;width:0.6px;height:10px;background:#d0d0d0"></div>
<div class="a" style="left:59.4px;top:59px;width:0.6px;height:10px;background:#d0d0d0"></div>
<div class="a" style="left:92.5px;top:59px;width:0.6px;height:10px;background:#d0d0d0"></div>
<div class="a" style="left:107.3px;top:59px;width:0.6px;height:10px;background:#d0d0d0"></div>
<div class="a" style="left:217.7px;top:59px;width:0.6px;height:10px;background:#d0d0d0"></div>
<div class="a" style="left:233.0px;top:59px;width:0.6px;height:10px;background:#d0d0d0"></div>
<div class="a" style="left:329.7px;top:59px;width:0.6px;height:10px;background:#d0d0d0"></div>
<div class="a" style="left:385.8px;top:59px;width:0.6px;height:10px;background:#d0d0d0"></div>
<div class="a" style="left:414.2px;top:59px;width:0.6px;height:10px;background:#d0d0d0"></div>
<svg class="a" style="left:4.2px;top:59.6px" width="8.0" height="8.0" viewBox="0 0 8 8"><circle cx="1.6" cy="1.4" r="1" fill="none" stroke="#333" stroke-width="0.7"/><circle cx="1.6" cy="6.2" r="1" fill="none" stroke="#333" stroke-width="0.7"/><path d="M1.6 2.4V5.2" stroke="#333" stroke-width="0.7"/><rect x="3.4" y="1" width="4.2" height="6.2" fill="#999"/><path d="M4.2 4.2L5.2 5.2L6.8 2.8" stroke="#fff" stroke-width="0.7" fill="none"/></svg>
<svg class="a" style="left:4.6px;top:74.0px" width="7.0" height="9.0" viewBox="0 0 7 9"><path d="M2 0.4V8.4" stroke="#333" stroke-width="0.7"/><circle cx="2" cy="4.4" r="1.2" fill="#333"/><path d="M4.2 6H6.8M5.5 4.7V7.3" stroke="#2a5caa" stroke-width="0.8"/></svg>
<svg class="a" style="left:4.0px;top:88.2px" width="8.4" height="7.0" viewBox="0 0 8.4 7"><ellipse cx="4.2" cy="3" rx="4" ry="2.8" fill="#222"/><path d="M1.6 4.6L1 6.8L3.4 5.4Z" fill="#222"/></svg>
<svg class="a" style="left:4.0px;top:101.2px" width="8.6" height="8.4" viewBox="0 0 8.6 8.4"><rect x="0.6" y="3.4" width="4.4" height="4" rx="0.5" fill="none" stroke="#333" stroke-width="0.8"/><path d="M0.6 4.8H5M2.8 3.4V2.6" stroke="#333" stroke-width="0.7"/><circle cx="6.4" cy="2.2" r="1.6" fill="none" stroke="#333" stroke-width="0.9"/><path d="M5 4.4L6 3.4" stroke="#333" stroke-width="0.7"/></svg>
<svg class="a" style="left:4.4px;top:115.4px" width="8.0" height="9.0" viewBox="0 0 8 9"><circle cx="4" cy="5" r="3.2" fill="none" stroke="#333" stroke-width="0.9"/><path d="M4 5V3.2M3 0.6H5M4 0.6V1.8" stroke="#333" stroke-width="0.8" fill="none"/></svg>
<svg class="a" style="left:4.4px;top:129.6px" width="7.6" height="8.4" viewBox="0 0 7.6 8.4"><rect x="0.4" y="0.4" width="6.8" height="7.6" fill="#777"/><path d="M1.4 2.2H3M1.4 4.2H3M1.4 6.2H3M4 2.2H6.2M4 4.2H6.2M4 6.2H6.2" stroke="#fff" stroke-width="0.8"/></svg>
<svg class="a" style="left:19.4px;top:61.0px" width="6.4" height="6.0" viewBox="0 0 6.4 6"><path d="M0.4 2.4L2.6 0.4V1.6C4.8 1.6 6 3 6 5.4C5.2 4 4.2 3.4 2.6 3.4V4.6Z" fill="#bdbdbd"/></svg>
<svg class="a" style="left:33.4px;top:61.0px" width="6.4" height="6.0" viewBox="0 0 6.4 6"><path d="M6 2.4L3.8 0.4V1.6C1.6 1.6 0.4 3 0.4 5.4C1.2 4 2.2 3.4 3.8 3.4V4.6Z" fill="#222"/></svg>
<svg class="a" style="left:47.8px;top:59.8px" width="8.4" height="8.4" viewBox="0 0 8.4 8.4"><circle cx="4.2" cy="4.2" r="4" fill="#c4dcf4"/><circle cx="4.2" cy="4.2" r="2" fill="none" stroke="#8ab4e0" stroke-width="0.7"/><path d="M2.6 5.4H5.8M3 6.2H5.4" stroke="#8ab4e0" stroke-width="0.5"/></svg>
<svg class="a" style="left:64.0px;top:60.6px" width="6.6" height="7.0" viewBox="0 0 6.6 7"><path d="M1.6 0.4H0.4V6.6H6V2.2" fill="none" stroke="#333" stroke-width="0.7"/><path d="M2.8 1V4.2H5.6" fill="none" stroke="#333" stroke-width="0.7"/><path d="M2.8 0.4L6 0.4L6 2Z" fill="#333"/></svg>
<div class="t" style="left:73.2px;top:62.1px;font-size:5.40px;color:#444;font-weight:bold;transform:scaleX(0.9532);">Insert</div>
<svg class="a" style="left:96.2px;top:60.4px" width="7.4" height="7.4" viewBox="0 0 7.4 7.4"><circle cx="3.7" cy="3.7" r="3.1" fill="#f4f4f4" stroke="#777" stroke-width="1.25"/><path d="M3.7 1.6V3.7L5.4 4.8" stroke="#777" stroke-width="0.8" fill="none"/></svg>
<svg class="a" style="left:111.0px;top:60.0px" width="8.0" height="8.0" viewBox="0 0 8 8"><defs><linearGradient id="cup" x1="0" y1="0" x2="0" y2="1"><stop offset="0" stop-color="#f0f0f0"/><stop offset="0.55" stop-color="#bbb"/><stop offset="1" stop-color="#333"/></linearGradient></defs><path d="M1 1H7V5.6A1.6 1.6 0 0 1 5.4 7.2H2.6A1.6 1.6 0 0 1 1 5.6Z" fill="url(#cup)" stroke="#666" stroke-width="0.6"/></svg>
<svg class="a" style="left:124.9px;top:60.0px" width="8.0" height="8.0" viewBox="0 0 8 8"><path d="M0.8 3.6A3.2 2 0 0 1 7.2 3.6L6.4 5.8A2.6 1.2 0 0 0 1.6 5.8Z" fill="#444"/><ellipse cx="4" cy="3.6" rx="1.6" ry="0.9" fill="#fff"/><path d="M2.4 6.6L1.2 4.8H3.4ZM5.6 6.6L4.6 4.8H6.8Z" fill="#333"/></svg>
<svg class="a" style="left:138.6px;top:60.0px" width="8.0" height="8.0" viewBox="0 0 8 8"><path d="M0.8 2.8H7.2V6.6H0.8Z" fill="#f4f4f4" stroke="#555" stroke-width="0.8"/><path d="M4 3.6V1.2" stroke="#333" stroke-width="0.9"/><path d="M2.8 2L4 0.4L5.2 2Z" fill="#333"/></svg>
<svg class="a" style="left:152.0px;top:60.0px" width="8.0" height="8.0" viewBox="0 0 8 8"><path d="M4 0.6V7.4" stroke="#444" stroke-width="1.3"/><path d="M0.8 4H7.2" stroke="#444" stroke-width="2.2"/><path d="M2 2.4H6" stroke="#888" stroke-width="0.6"/></svg>
<svg class="a" style="left:165.5px;top:60.0px" width="8.0" height="8.0" viewBox="0 0 8 8"><path d="M4 0.6L7.6 4L4 7.4L0.4 4Z" fill="#444"/><path d="M4 2.6L5.6 4L4 5.4L2.4 4Z" fill="#fff"/><path d="M4 0.4V2.4M4 5.6V7.6" stroke="#fff" stroke-width="0.5"/></svg>
<svg class="a" style="left:179.0px;top:60.0px" width="8.0" height="8.0" viewBox="0 0 8 8"><path d="M1 4.6H7V7.2H1Z" fill="#d8d8d8"/><path d="M4 6.2V2.4" stroke="#333" stroke-width="1"/><path d="M2.2 3.4L4 0.8L5.8 3.4Z" fill="#333"/></svg>
<svg class="a" style="left:192.4px;top:60.0px" width="8.0" height="8.0" viewBox="0 0 8 8"><path d="M4 0.6V7.4M0.6 4H7.4" stroke="#333" stroke-width="1"/><path d="M3 1.6L4 0.2L5 1.6ZM3 6.4L4 7.8L5 6.4ZM1.6 3L0.2 4L1.6 5ZM6.4 3L7.8 4L6.4 5Z" fill="#333"/><circle cx="4" cy="4" r="1.5" fill="#ddd" stroke="#444" stroke-width="0.6"/></svg>
<svg class="a" style="left:206.0px;top:60.0px" width="8.0" height="8.0" viewBox="0 0 8 8"><path d="M1.6 1V7M6.4 1V7" stroke="#aaa" stroke-width="0.8"/><path d="M2.4 4H5.6M3.4 3L2.4 4L3.4 5M4.6 3L5.6 4L4.6 5" fill="none" stroke="#999" stroke-width="0.6"/></svg>
<svg class="a" style="left:221.8px;top:60.0px" width="8.0" height="8.0" viewBox="0 0 8 8"><path d="M0.8 1.6C3.4 1.4 5.4 3 6 6.4" fill="none" stroke="#444" stroke-width="0.9"/><path d="M2 0.8L4.4 2.6" stroke="#888" stroke-width="0.7"/><path d="M5 5.6L6.2 7.4L7 5.4Z" fill="#222"/></svg>
<svg class="a" style="left:236.8px;top:60.0px" width="8.0" height="8.0" viewBox="0 0 8 8"><rect x="0.8" y="0.8" width="6.4" height="6.4" fill="none" stroke="#888" stroke-width="0.7" stroke-dasharray="1.4 0.8"/><path d="M2 2L6 6M6 2L2 6" stroke="#666" stroke-width="0.8"/></svg>
<svg class="a" style="left:250.0px;top:60.0px" width="8.0" height="8.0" viewBox="0 0 8 8"><rect x="1.6" y="1.4" width="5.6" height="5.8" fill="#e8e8e8" stroke="#555" stroke-width="0.6"/><rect x="1.6" y="1.4" width="3" height="3" fill="#222"/><path d="M0.4 2.6L2 2.6" stroke="#222" stroke-width="1"/><rect x="4" y="4.4" width="2.4" height="2" fill="#888"/></svg>
<svg class="a" style="left:264.0px;top:60.0px" width="8.0" height="8.0" viewBox="0 0 8 8"><rect x="0.8" y="0.8" width="5.4" height="5.4" fill="#f0f0f0" stroke="#777" stroke-width="0.7"/><circle cx="4.4" cy="4.4" r="1.5" fill="#fff" stroke="#555" stroke-width="0.6"/><path d="M5.4 5.4L7.2 7.2" stroke="#222" stroke-width="1"/></svg>
<svg class="a" style="left:277.6px;top:60.0px" width="8.0" height="8.0" viewBox="0 0 8 8"><path d="M0.8 7H7.2V4.4H5.2V1H3.2L0.8 4.4Z" fill="#eee" stroke="#666" stroke-width="0.7"/><circle cx="5.6" cy="1.4" r="0.9" fill="#888"/></svg>
<svg class="a" style="left:291.4px;top:60.0px" width="8.0" height="8.0" viewBox="0 0 8 8"><path d="M0.8 5.2L2.4 4V1H4.4V4.4L7.2 5.4V7H0.8Z" fill="#e4e4e4" stroke="#888" stroke-width="0.7"/><path d="M2.4 5.6H7" stroke="#999" stroke-width="0.6"/></svg>
<svg class="a" style="left:305.0px;top:60.0px" width="8.0" height="8.0" viewBox="0 0 8 8"><rect x="0.8" y="0.8" width="6.4" height="6.4" fill="#555"/><rect x="1.6" y="1.6" width="2.6" height="2.4" fill="#ccc"/><path d="M0.8 5H7.2" stroke="#888" stroke-width="0.5"/></svg>
<svg class="a" style="left:318.0px;top:60.0px" width="8.0" height="8.0" viewBox="0 0 8 8"><path d="M0.6 3.4L3 1.6L4.6 2.8L2.2 4.6Z M3.4 4.4L5.8 2.6L7.4 3.8L5 5.6Z M1.4 5.6L3 4.6L4.4 5.8L2.8 6.8Z" fill="#555"/></svg>
<svg class="a" style="left:333.4px;top:60.0px" width="8.0" height="8.0" viewBox="0 0 8 8"><circle cx="2.2" cy="2.4" r="1.5" fill="#fff" stroke="#222" stroke-width="1.1"/><circle cx="5.4" cy="5.2" r="1.7" fill="#fff" stroke="#222" stroke-width="1.2"/></svg>
<svg class="a" style="left:347.0px;top:60.0px" width="8.0" height="8.0" viewBox="0 0 8 8"><circle cx="4" cy="3" r="2.1" fill="#fff" stroke="#222" stroke-width="1.3"/><circle cx="4" cy="3" r="0.7" fill="#222"/><path d="M1 7H7" stroke="#222" stroke-width="1.2"/><path d="M2.6 5.8H5.4" stroke="#222" stroke-width="0.9"/></svg>
<svg class="a" style="left:361.0px;top:60.0px" width="8.0" height="8.0" viewBox="0 0 8 8"><path d="M0.8 1.4H7.2M0.8 3H7.2M0.8 4.6H7.2" stroke="#333" stroke-width="0.7"/><path d="M2.6 0.8V4.8M5.4 0.8V4.8" stroke="#333" stroke-width="0.6"/><path d="M2 6.6H6" stroke="#222" stroke-width="1"/></svg>
<svg class="a" style="left:374.6px;top:60.0px" width="8.0" height="8.0" viewBox="0 0 8 8"><path d="M1 1.4H4M3 3.8H7M1 6.2H5" stroke="#888" stroke-width="1"/><rect x="4.6" y="0.8" width="2.4" height="1.8" fill="none" stroke="#999" stroke-width="0.5"/><rect x="0.8" y="3" width="1.8" height="1.8" fill="none" stroke="#999" stroke-width="0.5"/></svg>
<svg class="a" style="left:389.0px;top:60.0px" width="8.0" height="8.0" viewBox="0 0 8 8"><rect x="0.8" y="0.8" width="6.4" height="6.4" fill="#e6e6e6" stroke="#999" stroke-width="0.6"/><rect x="2" y="1.8" width="3.8" height="2.4" fill="#888"/><path d="M2 5.6H6" stroke="#777" stroke-width="0.8"/></svg>
<svg class="a" style="left:403.0px;top:60.0px" width="8.0" height="8.0" viewBox="0 0 8 8"><path d="M1 1.6H5V7H1Z" fill="#ddd" stroke="#777" stroke-width="0.7"/><path d="M3 0.8H7V6.2" fill="none" stroke="#666" stroke-width="0.7"/><path d="M2.4 3.4H3.8V5.6" stroke="#555" stroke-width="0.7" fill="none"/></svg>
<svg class="a" style="left:418.4px;top:60.0px" width="8.0" height="8.0" viewBox="0 0 8 8"><circle cx="4.6" cy="3.2" r="2.3" fill="none" stroke="#3a4660" stroke-width="0.8"/><path d="M4.6 3.2V1.6" stroke="#3a4660" stroke-width="0.6"/><path d="M3 4.8L0.8 7.2" stroke="#2a5090" stroke-width="1"/></svg>
<svg class="a" style="left:431.8px;top:60.0px" width="8.0" height="8.0" viewBox="0 0 8 8"><path d="M1.6 2H6.4L7 3.6L6.4 5.2H1.6L1 3.6Z" fill="none" stroke="#3a4660" stroke-width="0.8"/><path d="M2.8 5.2V7M5.2 5.2V7M2.8 7H5.2" stroke="#3a4660" stroke-width="0.7" fill="none"/></svg>
<svg class="a" style="left:445.5px;top:60.0px" width="8.0" height="8.0" viewBox="0 0 8 8"><ellipse cx="4" cy="2.6" rx="3" ry="1.8" fill="none" stroke="#3a4660" stroke-width="0.8"/><path d="M1 3V5.4M7 3V5.4" stroke="#3a4660" stroke-width="0.8"/><path d="M2.4 5.6V7M4 5.6V7.2M5.6 5.6V7" stroke="#6a90c8" stroke-width="0.7"/></svg>
<svg class="a" style="left:459.0px;top:60.0px" width="8.0" height="8.0" viewBox="0 0 8 8"><path d="M1.4 0.8V3M6.6 0.8V3M1.4 5V7.2M6.6 5V7.2" stroke="#3a4660" stroke-width="0.8"/><path d="M1.4 2.4H6.6M1.4 5.6H6.6M2 2.4L6 5.6M6 2.4L2 5.6" stroke="#3a4660" stroke-width="0.7" fill="none"/></svg>
<svg class="a" style="left:473.0px;top:60.0px" width="8.0" height="8.0" viewBox="0 0 8 8"><path d="M1.2 1.6H6.8V3.6L4 6L1.2 3.6Z" fill="none" stroke="#3a4660" stroke-width="0.8"/><path d="M0.6 1.2L1.6 2M7.4 1.2L6.4 2M4 6V7.4" stroke="#3a4660" stroke-width="0.7"/></svg>
<div class="a" style="left:488px;top:57.6px;width:63.6px;height:12px;background:#efefef;border-radius:1px"></div>
<div class="t" style="left:491.5px;top:61.9px;font-size:5.30px;color:#444;font-weight:normal;transform:scaleX(1.0337);">Search tools...</div>
<div class="a" style="left:528.4px;top:60.8px;width:12.6px;height:6.8px;border:0.5px solid #999;background:#f8f8f8"></div>
<div class="t" style="left:529.6px;top:63.1px;font-size:3.80px;color:#444;font-weight:normal;transform:scaleX(1.3156);">alt/~</div>
<div class="a" style="left:542px;top:60.8px;width:5.8px;height:6.8px;border:0.5px solid #999;background:#f8f8f8"></div>
<div class="t" style="left:543.8px;top:62.7px;font-size:4.20px;color:#444;font-weight:normal;">c</div>
<svg class="a" style="left:20.6px;top:77.0px" width="6.4" height="6.6" viewBox="0 0 6.4 6.6"><path d="M0.5 0.5H5.9L3.8 3.2V6L2.6 5.2V3.2Z" fill="none" stroke="#444" stroke-width="0.7"/></svg>
<div class="a" style="left:31.5px;top:74.6px;width:49px;height:11.6px;border:0.6px solid #cfcfcf;border-radius:1.5px;background:#fff"></div>
<div class="t" style="left:34.4px;top:78.4px;font-size:5.20px;color:#999;font-weight:normal;transform:scaleX(0.9886);"><i>Filter by name</i></div>
<svg class="a" style="left:86.0px;top:77.2px" width="6.4" height="5.8" viewBox="0 0 6.4 5.8"><path d="M0 0.8H6.4M0 2.9H6.4M0 5H6.4" stroke="#333" stroke-width="0.9"/></svg>
<div class="t" style="left:18.0px;top:90.2px;font-size:5.50px;color:#222;font-weight:bold;transform:scaleX(0.9267);">Instances (30)</div>
<svg class="a" style="left:86.4px;top:89.4px" width="7.4" height="6.4" viewBox="0 0 7.4 6.4"><path d="M0.5 1.4H3L3.6 2.2H6.9V5.9H0.5Z" fill="none" stroke="#5a7eb0" stroke-width="0.6"/><path d="M1.4 4H3.8M2.6 2.9V5.1" stroke="#1f4f9a" stroke-width="0.7"/></svg>
<svg class="a" style="left:91.4px;top:100.2px" width="3.0" height="2.4" viewBox="0 0 3 2.4"><path d="M0.2 2.2L1.5 0.4L2.8 2.2Z" fill="#888"/></svg>
<div class="a" style="left:91.2px;top:105.6px;width:3.4px;height:314.6px;background:#8c8c8c;border-radius:1.2px"></div>
<svg class="a" style="left:91.3px;top:548.6px" width="3.0" height="2.4" viewBox="0 0 3 2.4"><path d="M0.2 0.2L1.5 2L2.8 0.2Z" fill="#555"/></svg>
<div class="a" style="left:19.4px;top:463px;width:0.5px;height:91px;background:#ececec"></div>
<svg class="a" style="left:18.6px;top:99.8px" width="6.4" height="6.8" viewBox="0 0 6.4 6.8"><rect x="0.4" y="0.6" width="5.4" height="5.6" rx="0.6" fill="none" stroke="#666" stroke-width="0.6"/><rect x="1.2" y="1.4" width="2.8" height="2.8" fill="#888"/><path d="M1.2 5.2H5" stroke="#888" stroke-width="0.5"/></svg>
<div class="t" style="left:26.6px;top:101.2px;font-size:5.35px;color:#444;font-weight:normal;transform:scaleX(0.8872);">Asse...</div>
<svg class="a" style="left:48.2px;top:99.5px" width="4.4" height="7.4" viewBox="0 0 4.4 7.4"><circle cx="2.2" cy="1.4" r="1.1" fill="#555"/><path d="M1.4 2.4H3L3.4 5.2H1Z" fill="#888"/><rect x="0.4" y="5.2" width="3.6" height="1.8" fill="#aaa"/></svg>
<svg class="a" style="left:28.4px;top:112.3px" width="2.6" height="2.6" viewBox="0 0 2.6 2.6"><circle cx="1.3" cy="1.3" r="1.1" fill="#999"/></svg>
<div class="t" style="left:34.6px;top:111.6px;font-size:5.35px;color:#444;font-weight:normal;transform:scaleX(0.9393);">Origin</div>
<svg class="a" style="left:26.2px;top:120.7px" width="6.4" height="6.6" viewBox="0 0 6.4 6.6"><path d="M0.5 2.6H2.4V0.9A0.8 0.8 0 0 1 4 0.9V2.6H5.9V6.1H0.5Z" fill="none" stroke="#777" stroke-width="0.55"/><path d="M0.5 4.2H3.6" stroke="#777" stroke-width="0.45"/></svg>
<div class="t" style="left:34.6px;top:122.0px;font-size:5.35px;color:#444;font-weight:normal;transform:scaleX(0.8957);">Stepp...</div>
<svg class="a" style="left:56.8px;top:120.5px" width="2.4" height="7.2" viewBox="0 0 2.4 7.2"><path d="M1.2 0V7.2" stroke="#888" stroke-width="0.6"/><circle cx="1.2" cy="3.6" r="1" fill="#222"/></svg>
<svg class="a" style="left:26.2px;top:131.1px" width="6.4" height="6.6" viewBox="0 0 6.4 6.6"><path d="M0.5 2.6H2.4V0.9A0.8 0.8 0 0 1 4 0.9V2.6H5.9V6.1H0.5Z" fill="none" stroke="#777" stroke-width="0.55"/><path d="M0.5 4.2H3.6" stroke="#777" stroke-width="0.45"/></svg>
<div class="t" style="left:34.6px;top:132.4px;font-size:5.35px;color:#444;font-weight:normal;transform:scaleX(0.9548);">Housing - cycloidal ...</div>
<svg class="a" style="left:26.2px;top:141.5px" width="6.4" height="6.6" viewBox="0 0 6.4 6.6"><path d="M0.5 2.6H2.4V0.9A0.8 0.8 0 0 1 4 0.9V2.6H5.9V6.1H0.5Z" fill="none" stroke="#777" stroke-width="0.55"/><path d="M0.5 4.2H3.6" stroke="#777" stroke-width="0.45"/></svg>
<div class="t" style="left:34.6px;top:142.8px;font-size:5.35px;color:#444;font-weight:normal;transform:scaleX(0.8455);">Sh...</div>
<svg class="a" style="left:46.8px;top:141.7px" width="6.4" height="6.2" viewBox="0 0 6.4 6.2"><path d="M3.2 0.9V3.4L0.8 5.2M3.2 3.4L5.6 5.2" fill="none" stroke="#222" stroke-width="0.9"/><circle cx="3.2" cy="0.9" r="0.8" fill="#222"/><circle cx="0.8" cy="5.2" r="0.7" fill="#222"/><circle cx="5.6" cy="5.2" r="0.7" fill="#222"/></svg>
<svg class="a" style="left:26.2px;top:151.9px" width="6.4" height="6.6" viewBox="0 0 6.4 6.6"><path d="M0.5 2.6H2.4V0.9A0.8 0.8 0 0 1 4 0.9V2.6H5.9V6.1H0.5Z" fill="none" stroke="#777" stroke-width="0.55"/><path d="M0.5 4.2H3.6" stroke="#777" stroke-width="0.45"/></svg>
<div class="t" style="left:34.6px;top:153.2px;font-size:5.35px;color:#444;font-weight:normal;transform:scaleX(0.8689);">Ec...</div>
<svg class="a" style="left:46.8px;top:152.1px" width="6.4" height="6.2" viewBox="0 0 6.4 6.2"><path d="M3.2 0.9V3.4L0.8 5.2M3.2 3.4L5.6 5.2" fill="none" stroke="#222" stroke-width="0.9"/><circle cx="3.2" cy="0.9" r="0.8" fill="#222"/><circle cx="0.8" cy="5.2" r="0.7" fill="#222"/><circle cx="5.6" cy="5.2" r="0.7" fill="#222"/></svg>
<svg class="a" style="left:26.2px;top:162.3px" width="6.4" height="6.6" viewBox="0 0 6.4 6.6"><path d="M0.5 2.6H2.4V0.9A0.8 0.8 0 0 1 4 0.9V2.6H5.9V6.1H0.5Z" fill="none" stroke="#c8c8c8" stroke-width="0.55"/><path d="M0.5 4.2H3.6" stroke="#c8c8c8" stroke-width="0.45"/></svg>
<div class="t" style="left:34.6px;top:163.6px;font-size:5.35px;color:#c0c0c0;font-weight:normal;transform:scaleX(0.8779);">Cy...</div>
<svg class="a" style="left:46.8px;top:162.5px" width="6.4" height="6.2" viewBox="0 0 6.4 6.2"><path d="M3.2 0.9V3.4L0.8 5.2M3.2 3.4L5.6 5.2" fill="none" stroke="#c4c4c4" stroke-width="0.9"/><circle cx="3.2" cy="0.9" r="0.8" fill="#c4c4c4"/><circle cx="0.8" cy="5.2" r="0.7" fill="#c4c4c4"/><circle cx="5.6" cy="5.2" r="0.7" fill="#c4c4c4"/></svg>
<svg class="a" style="left:26.2px;top:172.7px" width="6.4" height="6.6" viewBox="0 0 6.4 6.6"><path d="M0.5 2.6H2.4V0.9A0.8 0.8 0 0 1 4 0.9V2.6H5.9V6.1H0.5Z" fill="none" stroke="#777" stroke-width="0.55"/><path d="M0.5 4.2H3.6" stroke="#777" stroke-width="0.45"/></svg>
<div class="t" style="left:34.6px;top:174.0px;font-size:5.35px;color:#444;font-weight:normal;transform:scaleX(0.8636);">Ba...</div>
<svg class="a" style="left:46.8px;top:172.9px" width="6.4" height="6.2" viewBox="0 0 6.4 6.2"><path d="M3.2 0.9V3.4L0.8 5.2M3.2 3.4L5.6 5.2" fill="none" stroke="#222" stroke-width="0.9"/><circle cx="3.2" cy="0.9" r="0.8" fill="#222"/><circle cx="0.8" cy="5.2" r="0.7" fill="#222"/><circle cx="5.6" cy="5.2" r="0.7" fill="#222"/></svg>
<svg class="a" style="left:56.8px;top:172.5px" width="2.4" height="7.2" viewBox="0 0 2.4 7.2"><path d="M1.2 0V7.2" stroke="#888" stroke-width="0.6"/><circle cx="1.2" cy="3.6" r="1" fill="#222"/></svg>
<svg class="a" style="left:26.2px;top:183.1px" width="6.4" height="6.6" viewBox="0 0 6.4 6.6"><path d="M0.5 2.6H2.4V0.9A0.8 0.8 0 0 1 4 0.9V2.6H5.9V6.1H0.5Z" fill="none" stroke="#777" stroke-width="0.55"/><path d="M0.5 4.2H3.6" stroke="#777" stroke-width="0.45"/></svg>
<div class="t" style="left:34.6px;top:184.4px;font-size:5.35px;color:#444;font-weight:normal;transform:scaleX(0.8636);">Ba...</div>
<svg class="a" style="left:46.8px;top:183.3px" width="6.4" height="6.2" viewBox="0 0 6.4 6.2"><path d="M3.2 0.9V3.4L0.8 5.2M3.2 3.4L5.6 5.2" fill="none" stroke="#222" stroke-width="0.9"/><circle cx="3.2" cy="0.9" r="0.8" fill="#222"/><circle cx="0.8" cy="5.2" r="0.7" fill="#222"/><circle cx="5.6" cy="5.2" r="0.7" fill="#222"/></svg>
<svg class="a" style="left:56.8px;top:182.9px" width="2.4" height="7.2" viewBox="0 0 2.4 7.2"><path d="M1.2 0V7.2" stroke="#888" stroke-width="0.6"/><circle cx="1.2" cy="3.6" r="1" fill="#222"/></svg>
<svg class="a" style="left:26.2px;top:193.5px" width="6.4" height="6.6" viewBox="0 0 6.4 6.6"><path d="M0.5 2.6H2.4V0.9A0.8 0.8 0 0 1 4 0.9V2.6H5.9V6.1H0.5Z" fill="none" stroke="#777" stroke-width="0.55"/><path d="M0.5 4.2H3.6" stroke="#777" stroke-width="0.45"/></svg>
<div class="t" style="left:34.6px;top:194.8px;font-size:5.35px;color:#444;font-weight:normal;transform:scaleX(0.8636);">Ba...</div>
<svg class="a" style="left:46.8px;top:193.7px" width="6.4" height="6.2" viewBox="0 0 6.4 6.2"><path d="M3.2 0.9V3.4L0.8 5.2M3.2 3.4L5.6 5.2" fill="none" stroke="#222" stroke-width="0.9"/><circle cx="3.2" cy="0.9" r="0.8" fill="#222"/><circle cx="0.8" cy="5.2" r="0.7" fill="#222"/><circle cx="5.6" cy="5.2" r="0.7" fill="#222"/></svg>
<svg class="a" style="left:56.8px;top:193.3px" width="2.4" height="7.2" viewBox="0 0 2.4 7.2"><path d="M1.2 0V7.2" stroke="#888" stroke-width="0.6"/><circle cx="1.2" cy="3.6" r="1" fill="#222"/></svg>
<svg class="a" style="left:26.2px;top:203.9px" width="6.4" height="6.6" viewBox="0 0 6.4 6.6"><path d="M0.5 2.6H2.4V0.9A0.8 0.8 0 0 1 4 0.9V2.6H5.9V6.1H0.5Z" fill="none" stroke="#c8c8c8" stroke-width="0.55"/><path d="M0.5 4.2H3.6" stroke="#c8c8c8" stroke-width="0.45"/></svg>
<div class="t" style="left:34.6px;top:205.3px;font-size:5.35px;color:#c0c0c0;font-weight:normal;transform:scaleX(0.8779);">Cy...</div>
<svg class="a" style="left:46.8px;top:204.2px" width="6.4" height="6.2" viewBox="0 0 6.4 6.2"><path d="M3.2 0.9V3.4L0.8 5.2M3.2 3.4L5.6 5.2" fill="none" stroke="#c4c4c4" stroke-width="0.9"/><circle cx="3.2" cy="0.9" r="0.8" fill="#c4c4c4"/><circle cx="0.8" cy="5.2" r="0.7" fill="#c4c4c4"/><circle cx="5.6" cy="5.2" r="0.7" fill="#c4c4c4"/></svg>
<svg class="a" style="left:26.2px;top:214.4px" width="6.4" height="6.6" viewBox="0 0 6.4 6.6"><path d="M0.5 2.6H2.4V0.9A0.8 0.8 0 0 1 4 0.9V2.6H5.9V6.1H0.5Z" fill="none" stroke="#777" stroke-width="0.55"/><path d="M0.5 4.2H3.6" stroke="#777" stroke-width="0.45"/></svg>
<div class="t" style="left:34.6px;top:215.7px;font-size:5.35px;color:#444;font-weight:normal;transform:scaleX(0.8453);">Ou...</div>
<svg class="a" style="left:46.8px;top:214.6px" width="6.4" height="6.2" viewBox="0 0 6.4 6.2"><path d="M3.2 0.9V3.4L0.8 5.2M3.2 3.4L5.6 5.2" fill="none" stroke="#222" stroke-width="0.9"/><circle cx="3.2" cy="0.9" r="0.8" fill="#222"/><circle cx="0.8" cy="5.2" r="0.7" fill="#222"/><circle cx="5.6" cy="5.2" r="0.7" fill="#222"/></svg>
<svg class="a" style="left:26.2px;top:224.8px" width="6.4" height="6.6" viewBox="0 0 6.4 6.6"><path d="M0.5 2.6H2.4V0.9A0.8 0.8 0 0 1 4 0.9V2.6H5.9V6.1H0.5Z" fill="none" stroke="#777" stroke-width="0.55"/><path d="M0.5 4.2H3.6" stroke="#777" stroke-width="0.45"/></svg>
<div class="t" style="left:34.6px;top:226.1px;font-size:5.35px;color:#444;font-weight:normal;transform:scaleX(0.8909);">Bu...</div>
<svg class="a" style="left:46.8px;top:225.0px" width="6.4" height="6.2" viewBox="0 0 6.4 6.2"><path d="M3.2 0.9V3.4L0.8 5.2M3.2 3.4L5.6 5.2" fill="none" stroke="#222" stroke-width="0.9"/><circle cx="3.2" cy="0.9" r="0.8" fill="#222"/><circle cx="0.8" cy="5.2" r="0.7" fill="#222"/><circle cx="5.6" cy="5.2" r="0.7" fill="#222"/></svg>
<svg class="a" style="left:26.2px;top:235.2px" width="6.4" height="6.6" viewBox="0 0 6.4 6.6"><path d="M0.5 2.6H2.4V0.9A0.8 0.8 0 0 1 4 0.9V2.6H5.9V6.1H0.5Z" fill="none" stroke="#777" stroke-width="0.55"/><path d="M0.5 4.2H3.6" stroke="#777" stroke-width="0.45"/></svg>
<div class="t" style="left:34.6px;top:236.5px;font-size:5.35px;color:#444;font-weight:normal;transform:scaleX(0.8453);">Ou...</div>
<svg class="a" style="left:46.8px;top:235.4px" width="6.4" height="6.2" viewBox="0 0 6.4 6.2"><path d="M3.2 0.9V3.4L0.8 5.2M3.2 3.4L5.6 5.2" fill="none" stroke="#222" stroke-width="0.9"/><circle cx="3.2" cy="0.9" r="0.8" fill="#222"/><circle cx="0.8" cy="5.2" r="0.7" fill="#222"/><circle cx="5.6" cy="5.2" r="0.7" fill="#222"/></svg>
<svg class="a" style="left:26.2px;top:245.6px" width="6.4" height="6.6" viewBox="0 0 6.4 6.6"><path d="M0.5 2.6H2.4V0.9A0.8 0.8 0 0 1 4 0.9V2.6H5.9V6.1H0.5Z" fill="none" stroke="#777" stroke-width="0.55"/><path d="M0.5 4.2H3.6" stroke="#777" stroke-width="0.45"/></svg>
<div class="t" style="left:34.6px;top:246.9px;font-size:5.35px;color:#444;font-weight:normal;transform:scaleX(0.8636);">Ba...</div>
<svg class="a" style="left:46.8px;top:245.8px" width="6.4" height="6.2" viewBox="0 0 6.4 6.2"><path d="M3.2 0.9V3.4L0.8 5.2M3.2 3.4L5.6 5.2" fill="none" stroke="#222" stroke-width="0.9"/><circle cx="3.2" cy="0.9" r="0.8" fill="#222"/><circle cx="0.8" cy="5.2" r="0.7" fill="#222"/><circle cx="5.6" cy="5.2" r="0.7" fill="#222"/></svg>
<svg class="a" style="left:56.8px;top:245.4px" width="2.4" height="7.2" viewBox="0 0 2.4 7.2"><path d="M1.2 0V7.2" stroke="#888" stroke-width="0.6"/><circle cx="1.2" cy="3.6" r="1" fill="#222"/></svg>
<svg class="a" style="left:26.2px;top:256.0px" width="6.4" height="6.6" viewBox="0 0 6.4 6.6"><path d="M0.5 2.6H2.4V0.9A0.8 0.8 0 0 1 4 0.9V2.6H5.9V6.1H0.5Z" fill="none" stroke="#777" stroke-width="0.55"/><path d="M0.5 4.2H3.6" stroke="#777" stroke-width="0.45"/></svg>
<div class="t" style="left:34.6px;top:257.3px;font-size:5.35px;color:#444;font-weight:normal;transform:scaleX(0.8678);">Pi...</div>
<svg class="a" style="left:46.8px;top:256.2px" width="6.4" height="6.2" viewBox="0 0 6.4 6.2"><path d="M3.2 0.9V3.4L0.8 5.2M3.2 3.4L5.6 5.2" fill="none" stroke="#222" stroke-width="0.9"/><circle cx="3.2" cy="0.9" r="0.8" fill="#222"/><circle cx="0.8" cy="5.2" r="0.7" fill="#222"/><circle cx="5.6" cy="5.2" r="0.7" fill="#222"/></svg>
<svg class="a" style="left:26.2px;top:266.4px" width="6.4" height="6.6" viewBox="0 0 6.4 6.6"><path d="M0.5 2.6H2.4V0.9A0.8 0.8 0 0 1 4 0.9V2.6H5.9V6.1H0.5Z" fill="none" stroke="#777" stroke-width="0.55"/><path d="M0.5 4.2H3.6" stroke="#777" stroke-width="0.45"/></svg>
<div class="t" style="left:34.6px;top:267.7px;font-size:5.35px;color:#444;font-weight:normal;transform:scaleX(0.9333);">Bushing ID6mm OD...</div>
<svg class="a" style="left:26.2px;top:276.8px" width="6.4" height="6.6" viewBox="0 0 6.4 6.6"><path d="M0.5 2.6H2.4V0.9A0.8 0.8 0 0 1 4 0.9V2.6H5.9V6.1H0.5Z" fill="none" stroke="#777" stroke-width="0.55"/><path d="M0.5 4.2H3.6" stroke="#777" stroke-width="0.45"/></svg>
<div class="t" style="left:34.6px;top:278.1px;font-size:5.35px;color:#444;font-weight:normal;transform:scaleX(0.9508);">Pin-D6mm L30mm ...</div>
<svg class="a" style="left:26.2px;top:287.2px" width="6.4" height="6.6" viewBox="0 0 6.4 6.6"><path d="M0.5 2.6H2.4V0.9A0.8 0.8 0 0 1 4 0.9V2.6H5.9V6.1H0.5Z" fill="none" stroke="#777" stroke-width="0.55"/><path d="M0.5 4.2H3.6" stroke="#777" stroke-width="0.45"/></svg>
<div class="t" style="left:34.6px;top:288.5px;font-size:5.35px;color:#444;font-weight:normal;transform:scaleX(0.9779);">Front cover - cycloi...</div>
<svg class="a" style="left:26.2px;top:297.6px" width="6.4" height="6.6" viewBox="0 0 6.4 6.6"><path d="M0.5 2.6H2.4V0.9A0.8 0.8 0 0 1 4 0.9V2.6H5.9V6.1H0.5Z" fill="none" stroke="#777" stroke-width="0.55"/><path d="M0.5 4.2H3.6" stroke="#777" stroke-width="0.45"/></svg>
<div class="t" style="left:34.6px;top:298.9px;font-size:5.35px;color:#444;font-weight:normal;transform:scaleX(0.8957);">Ball B...</div>
<svg class="a" style="left:56.8px;top:297.4px" width="2.4" height="7.2" viewBox="0 0 2.4 7.2"><path d="M1.2 0V7.2" stroke="#888" stroke-width="0.6"/><circle cx="1.2" cy="3.6" r="1" fill="#222"/></svg>
<svg class="a" style="left:18.6px;top:309.1px" width="3.4" height="4.8" viewBox="0 0 3.4 4.8"><path d="M0.6 0.4L2.8 2.4L0.6 4.4" fill="none" stroke="#333" stroke-width="1.0"/></svg>
<svg class="a" style="left:26.2px;top:308.4px" width="7.0" height="6.0" viewBox="0 0 7 6"><path d="M0.4 2.4L2.4 0.6L4 1.8L2 3.6Z M2.8 3.2L4.8 1.4L6.6 2.6L4.6 4.4Z M0.8 4.4L2.6 3L4 4.2L2.4 5.6Z" fill="#666"/></svg>
<div class="t" style="left:34.6px;top:309.4px;font-size:5.35px;color:#444;font-weight:normal;transform:scaleX(1.0000);">Circular pattern 1</div>
<svg class="a" style="left:18.6px;top:319.5px" width="3.4" height="4.8" viewBox="0 0 3.4 4.8"><path d="M0.6 0.4L2.8 2.4L0.6 4.4" fill="none" stroke="#333" stroke-width="1.0"/></svg>
<svg class="a" style="left:26.6px;top:318.5px" width="6.0" height="6.8" viewBox="0 0 6 6.8"><path d="M0.8 0.6H5.2V2.2H0.8Z" fill="#ccc" stroke="#555" stroke-width="0.5"/><path d="M1.8 2.2V6.2H4.2V2.2M1.8 3.4H4.2M1.8 4.6H4.2" fill="none" stroke="#555" stroke-width="0.5"/></svg>
<div class="t" style="left:34.6px;top:319.8px;font-size:5.35px;color:#444;font-weight:normal;transform:scaleX(0.9438);">Hex socket head ca...</div>
<svg class="a" style="left:18.6px;top:329.9px" width="3.4" height="4.8" viewBox="0 0 3.4 4.8"><path d="M0.6 0.4L2.8 2.4L0.6 4.4" fill="none" stroke="#333" stroke-width="1.0"/></svg>
<svg class="a" style="left:26.2px;top:329.3px" width="7.0" height="6.0" viewBox="0 0 7 6"><path d="M0.4 2.4L2.4 0.6L4 1.8L2 3.6Z M2.8 3.2L4.8 1.4L6.6 2.6L4.6 4.4Z M0.8 4.4L2.6 3L4 4.2L2.4 5.6Z" fill="#666"/></svg>
<div class="t" style="left:34.6px;top:330.2px;font-size:5.35px;color:#444;font-weight:normal;transform:scaleX(1.0122);">Circular pattern 2</div>
<svg class="a" style="left:26.2px;top:339.3px" width="6.4" height="6.6" viewBox="0 0 6.4 6.6"><path d="M0.5 2.6H2.4V0.9A0.8 0.8 0 0 1 4 0.9V2.6H5.9V6.1H0.5Z" fill="none" stroke="#777" stroke-width="0.55"/><path d="M0.5 4.2H3.6" stroke="#777" stroke-width="0.45"/></svg>
<div class="t" style="left:34.6px;top:340.6px;font-size:5.35px;color:#444;font-weight:normal;transform:scaleX(0.8982);">M...</div>
<svg class="a" style="left:46.8px;top:339.5px" width="6.4" height="6.2" viewBox="0 0 6.4 6.2"><path d="M3.2 0.9V3.4L0.8 5.2M3.2 3.4L5.6 5.2" fill="none" stroke="#222" stroke-width="0.9"/><circle cx="3.2" cy="0.9" r="0.8" fill="#222"/><circle cx="0.8" cy="5.2" r="0.7" fill="#222"/><circle cx="5.6" cy="5.2" r="0.7" fill="#222"/></svg>
<svg class="a" style="left:18.6px;top:350.7px" width="3.4" height="4.8" viewBox="0 0 3.4 4.8"><path d="M0.6 0.4L2.8 2.4L0.6 4.4" fill="none" stroke="#333" stroke-width="1.0"/></svg>
<svg class="a" style="left:26.2px;top:350.1px" width="7.0" height="6.0" viewBox="0 0 7 6"><path d="M0.4 2.4L2.4 0.6L4 1.8L2 3.6Z M2.8 3.2L4.8 1.4L6.6 2.6L4.6 4.4Z M0.8 4.4L2.6 3L4 4.2L2.4 5.6Z" fill="#666"/></svg>
<div class="t" style="left:34.6px;top:351.0px;font-size:5.35px;color:#444;font-weight:normal;transform:scaleX(1.0122);">Circular pattern 3</div>
<svg class="a" style="left:18.6px;top:361.1px" width="3.4" height="4.8" viewBox="0 0 3.4 4.8"><path d="M0.6 0.4L2.8 2.4L0.6 4.4" fill="none" stroke="#333" stroke-width="1.0"/></svg>
<svg class="a" style="left:26.2px;top:360.5px" width="7.0" height="6.0" viewBox="0 0 7 6"><path d="M0.4 2.4L2.4 0.6L4 1.8L2 3.6Z M2.8 3.2L4.8 1.4L6.6 2.6L4.6 4.4Z M0.8 4.4L2.6 3L4 4.2L2.4 5.6Z" fill="#666"/></svg>
<div class="t" style="left:34.6px;top:361.4px;font-size:5.35px;color:#444;font-weight:normal;transform:scaleX(1.0122);">Circular pattern 4</div>
<svg class="a" style="left:26.2px;top:370.5px" width="6.4" height="6.6" viewBox="0 0 6.4 6.6"><path d="M0.5 2.6H2.4V0.9A0.8 0.8 0 0 1 4 0.9V2.6H5.9V6.1H0.5Z" fill="none" stroke="#777" stroke-width="0.55"/><path d="M0.5 4.2H3.6" stroke="#777" stroke-width="0.45"/></svg>
<div class="t" style="left:34.6px;top:371.8px;font-size:5.35px;color:#444;font-weight:normal;transform:scaleX(0.8407);">Di...</div>
<svg class="a" style="left:46.8px;top:370.7px" width="6.4" height="6.2" viewBox="0 0 6.4 6.2"><path d="M3.2 0.9V3.4L0.8 5.2M3.2 3.4L5.6 5.2" fill="none" stroke="#222" stroke-width="0.9"/><circle cx="3.2" cy="0.9" r="0.8" fill="#222"/><circle cx="0.8" cy="5.2" r="0.7" fill="#222"/><circle cx="5.6" cy="5.2" r="0.7" fill="#222"/></svg>
<svg class="a" style="left:26.2px;top:380.9px" width="6.4" height="6.6" viewBox="0 0 6.4 6.6"><path d="M0.5 2.6H2.4V0.9A0.8 0.8 0 0 1 4 0.9V2.6H5.9V6.1H0.5Z" fill="none" stroke="#777" stroke-width="0.55"/><path d="M0.5 4.2H3.6" stroke="#777" stroke-width="0.45"/></svg>
<div class="t" style="left:34.6px;top:382.2px;font-size:5.35px;color:#444;font-weight:normal;transform:scaleX(0.8407);">Di...</div>
<svg class="a" style="left:46.8px;top:381.1px" width="6.4" height="6.2" viewBox="0 0 6.4 6.2"><path d="M3.2 0.9V3.4L0.8 5.2M3.2 3.4L5.6 5.2" fill="none" stroke="#222" stroke-width="0.9"/><circle cx="3.2" cy="0.9" r="0.8" fill="#222"/><circle cx="0.8" cy="5.2" r="0.7" fill="#222"/><circle cx="5.6" cy="5.2" r="0.7" fill="#222"/></svg>
<svg class="a" style="left:26.2px;top:391.3px" width="6.4" height="6.6" viewBox="0 0 6.4 6.6"><path d="M0.5 2.6H2.4V0.9A0.8 0.8 0 0 1 4 0.9V2.6H5.9V6.1H0.5Z" fill="none" stroke="#777" stroke-width="0.55"/><path d="M0.5 4.2H3.6" stroke="#777" stroke-width="0.45"/></svg>
<div class="t" style="left:34.6px;top:392.6px;font-size:5.35px;color:#444;font-weight:normal;transform:scaleX(0.8779);">Cy...</div>
<svg class="a" style="left:46.8px;top:391.5px" width="6.4" height="6.2" viewBox="0 0 6.4 6.2"><path d="M3.2 0.9V3.4L0.8 5.2M3.2 3.4L5.6 5.2" fill="none" stroke="#222" stroke-width="0.9"/><circle cx="3.2" cy="0.9" r="0.8" fill="#222"/><circle cx="0.8" cy="5.2" r="0.7" fill="#222"/><circle cx="5.6" cy="5.2" r="0.7" fill="#222"/></svg>
<svg class="a" style="left:26.2px;top:401.7px" width="6.4" height="6.6" viewBox="0 0 6.4 6.6"><path d="M0.5 2.6H2.4V0.9A0.8 0.8 0 0 1 4 0.9V2.6H5.9V6.1H0.5Z" fill="none" stroke="#777" stroke-width="0.55"/><path d="M0.5 4.2H3.6" stroke="#777" stroke-width="0.45"/></svg>
<div class="t" style="left:34.6px;top:403.0px;font-size:5.35px;color:#444;font-weight:normal;transform:scaleX(0.8779);">Cy...</div>
<svg class="a" style="left:46.8px;top:401.9px" width="6.4" height="6.2" viewBox="0 0 6.4 6.2"><path d="M3.2 0.9V3.4L0.8 5.2M3.2 3.4L5.6 5.2" fill="none" stroke="#222" stroke-width="0.9"/><circle cx="3.2" cy="0.9" r="0.8" fill="#222"/><circle cx="0.8" cy="5.2" r="0.7" fill="#222"/><circle cx="5.6" cy="5.2" r="0.7" fill="#222"/></svg>
<svg class="a" style="left:26.2px;top:412.2px" width="6.4" height="6.6" viewBox="0 0 6.4 6.6"><path d="M0.5 2.6H2.4V0.9A0.8 0.8 0 0 1 4 0.9V2.6H5.9V6.1H0.5Z" fill="none" stroke="#777" stroke-width="0.55"/><path d="M0.5 4.2H3.6" stroke="#777" stroke-width="0.45"/></svg>
<div class="t" style="left:34.6px;top:413.5px;font-size:5.35px;color:#444;font-weight:normal;transform:scaleX(0.8779);">Cy...</div>
<svg class="a" style="left:46.8px;top:412.4px" width="6.4" height="6.2" viewBox="0 0 6.4 6.2"><path d="M3.2 0.9V3.4L0.8 5.2M3.2 3.4L5.6 5.2" fill="none" stroke="#222" stroke-width="0.9"/><circle cx="3.2" cy="0.9" r="0.8" fill="#222"/><circle cx="0.8" cy="5.2" r="0.7" fill="#222"/><circle cx="5.6" cy="5.2" r="0.7" fill="#222"/></svg>
<svg class="a" style="left:26.2px;top:422.6px" width="6.4" height="6.6" viewBox="0 0 6.4 6.6"><path d="M0.5 2.6H2.4V0.9A0.8 0.8 0 0 1 4 0.9V2.6H5.9V6.1H0.5Z" fill="none" stroke="#777" stroke-width="0.55"/><path d="M0.5 4.2H3.6" stroke="#777" stroke-width="0.45"/></svg>
<div class="t" style="left:34.6px;top:423.9px;font-size:5.35px;color:#444;font-weight:normal;transform:scaleX(0.8779);">Cy...</div>
<svg class="a" style="left:46.8px;top:422.8px" width="6.4" height="6.2" viewBox="0 0 6.4 6.2"><path d="M3.2 0.9V3.4L0.8 5.2M3.2 3.4L5.6 5.2" fill="none" stroke="#222" stroke-width="0.9"/><circle cx="3.2" cy="0.9" r="0.8" fill="#222"/><circle cx="0.8" cy="5.2" r="0.7" fill="#222"/><circle cx="5.6" cy="5.2" r="0.7" fill="#222"/></svg>
<svg class="a" style="left:17.6px;top:434.8px" width="4.8" height="3.4" viewBox="0 0 4.8 3.4"><path d="M0.4 0.6L2.4 2.8L4.4 0.6" fill="none" stroke="#333" stroke-width="0.8"/></svg>
<div class="t" style="left:25.2px;top:434.3px;font-size:5.35px;color:#333;font-weight:normal;transform:scaleX(0.9719);">Items (0)</div>
<svg class="a" style="left:17.6px;top:445.2px" width="4.8" height="3.4" viewBox="0 0 4.8 3.4"><path d="M0.4 0.6L2.4 2.8L4.4 0.6" fill="none" stroke="#333" stroke-width="0.8"/></svg>
<div class="t" style="left:25.2px;top:444.7px;font-size:5.35px;color:#333;font-weight:normal;transform:scaleX(0.9744);">Loads (0)</div>
<svg class="a" style="left:17.6px;top:455.6px" width="4.8" height="3.4" viewBox="0 0 4.8 3.4"><path d="M0.4 0.6L2.4 2.8L4.4 0.6" fill="none" stroke="#333" stroke-width="0.8"/></svg>
<div class="t" style="left:25.2px;top:455.1px;font-size:5.35px;color:#333;font-weight:normal;transform:scaleX(0.9680);">Mate Features (26)</div>
<svg class="a" style="left:25.6px;top:465.2px" width="3.4" height="4.8" viewBox="0 0 3.4 4.8"><path d="M0.6 0.4L2.8 2.4L0.6 4.4" fill="none" stroke="#333" stroke-width="1.0"/></svg>
<svg class="a" style="left:34.0px;top:464.6px" width="6.4" height="6.2" viewBox="0 0 6.4 6.2"><path d="M0.6 1.2V3.4A2.6 2.4 0 0 0 5.8 3.4V1.2" fill="#f2f2f2" stroke="#c4c4c4" stroke-width="0.6"/><path d="M1.4 4.4H5" stroke="#c4c4c4" stroke-width="0.6"/></svg>
<div class="t" style="left:42.0px;top:465.5px;font-size:5.35px;color:#b4b4b4;font-weight:normal;transform:scaleX(0.9346);">Fastened 1</div>
<svg class="a" style="left:25.6px;top:475.6px" width="3.4" height="4.8" viewBox="0 0 3.4 4.8"><path d="M0.6 0.4L2.8 2.4L0.6 4.4" fill="none" stroke="#333" stroke-width="1.0"/></svg>
<svg class="a" style="left:33.0px;top:475.4px" width="7.6" height="5.4" viewBox="0 0 7.6 5.4"><path d="M1.2 3.4A2.6 2 0 0 1 6.4 3.4" fill="none" stroke="#c4c4c4" stroke-width="0.7"/><path d="M0.2 2.6L1.2 4L2.2 2.8M5.4 2.8L6.4 4L7.4 2.6" fill="none" stroke="#c4c4c4" stroke-width="0.5"/><circle cx="3.8" cy="3.6" r="0.8" fill="#d0d0d0"/></svg>
<div class="t" style="left:42.0px;top:475.9px;font-size:5.35px;color:#b4b4b4;font-weight:normal;transform:scaleX(0.9780);">Revolute 2</div>
<svg class="a" style="left:25.6px;top:486.0px" width="3.4" height="4.8" viewBox="0 0 3.4 4.8"><path d="M0.6 0.4L2.8 2.4L0.6 4.4" fill="none" stroke="#333" stroke-width="1.0"/></svg>
<svg class="a" style="left:34.0px;top:485.4px" width="6.4" height="6.2" viewBox="0 0 6.4 6.2"><path d="M0.6 1.2V3.4A2.6 2.4 0 0 0 5.8 3.4V1.2" fill="#f2f2f2" stroke="#c4c4c4" stroke-width="0.6"/><path d="M1.4 4.4H5" stroke="#c4c4c4" stroke-width="0.6"/></svg>
<div class="t" style="left:42.0px;top:486.3px;font-size:5.35px;color:#b4b4b4;font-weight:normal;transform:scaleX(0.9533);">Fastened 3</div>
<svg class="a" style="left:25.6px;top:496.4px" width="3.4" height="4.8" viewBox="0 0 3.4 4.8"><path d="M0.6 0.4L2.8 2.4L0.6 4.4" fill="none" stroke="#333" stroke-width="1.0"/></svg>
<svg class="a" style="left:34.0px;top:495.8px" width="6.4" height="6.2" viewBox="0 0 6.4 6.2"><path d="M0.6 1.2V3.4A2.6 2.4 0 0 0 5.8 3.4V1.2" fill="#f2f2f2" stroke="#c4c4c4" stroke-width="0.6"/><path d="M1.4 4.4H5" stroke="#c4c4c4" stroke-width="0.6"/></svg>
<div class="t" style="left:42.0px;top:496.7px;font-size:5.35px;color:#b4b4b4;font-weight:normal;transform:scaleX(0.9533);">Fastened 4</div>
<svg class="a" style="left:25.6px;top:506.8px" width="3.4" height="4.8" viewBox="0 0 3.4 4.8"><path d="M0.6 0.4L2.8 2.4L0.6 4.4" fill="none" stroke="#333" stroke-width="1.0"/></svg>
<svg class="a" style="left:33.0px;top:506.6px" width="7.6" height="5.4" viewBox="0 0 7.6 5.4"><path d="M1.2 3.4A2.6 2 0 0 1 6.4 3.4" fill="none" stroke="#c4c4c4" stroke-width="0.7"/><path d="M0.2 2.6L1.2 4L2.2 2.8M5.4 2.8L6.4 4L7.4 2.6" fill="none" stroke="#c4c4c4" stroke-width="0.5"/><circle cx="3.8" cy="3.6" r="0.8" fill="#d0d0d0"/></svg>
<div class="t" style="left:42.0px;top:507.1px;font-size:5.35px;color:#b4b4b4;font-weight:normal;transform:scaleX(0.9780);">Revolute 3</div>
<svg class="a" style="left:25.6px;top:517.2px" width="3.4" height="4.8" viewBox="0 0 3.4 4.8"><path d="M0.6 0.4L2.8 2.4L0.6 4.4" fill="none" stroke="#333" stroke-width="1.0"/></svg>
<svg class="a" style="left:33.0px;top:517.0px" width="7.6" height="5.4" viewBox="0 0 7.6 5.4"><path d="M1.2 3.4A2.6 2 0 0 1 6.4 3.4" fill="none" stroke="#c4c4c4" stroke-width="0.7"/><path d="M0.2 2.6L1.2 4L2.2 2.8M5.4 2.8L6.4 4L7.4 2.6" fill="none" stroke="#c4c4c4" stroke-width="0.5"/><circle cx="3.8" cy="3.6" r="0.8" fill="#d0d0d0"/></svg>
<div class="t" style="left:42.0px;top:517.6px;font-size:5.35px;color:#b4b4b4;font-weight:normal;transform:scaleX(0.9584);">Revolute 1</div>
<svg class="a" style="left:25.6px;top:527.7px" width="3.4" height="4.8" viewBox="0 0 3.4 4.8"><path d="M0.6 0.4L2.8 2.4L0.6 4.4" fill="none" stroke="#333" stroke-width="1.0"/></svg>
<svg class="a" style="left:34.0px;top:527.1px" width="6.4" height="6.2" viewBox="0 0 6.4 6.2"><path d="M0.6 1.2V3.4A2.6 2.4 0 0 0 5.8 3.4V1.2" fill="#f2f2f2" stroke="#c4c4c4" stroke-width="0.6"/><path d="M1.4 4.4H5" stroke="#c4c4c4" stroke-width="0.6"/></svg>
<div class="t" style="left:42.0px;top:528.0px;font-size:5.35px;color:#b4b4b4;font-weight:normal;transform:scaleX(0.9422);">Fastened 12</div>
<svg class="a" style="left:25.6px;top:538.1px" width="3.4" height="4.8" viewBox="0 0 3.4 4.8"><path d="M0.6 0.4L2.8 2.4L0.6 4.4" fill="none" stroke="#333" stroke-width="1.0"/></svg>
<svg class="a" style="left:34.0px;top:537.5px" width="6.4" height="6.2" viewBox="0 0 6.4 6.2"><path d="M0.6 1.2V3.4A2.6 2.4 0 0 0 5.8 3.4V1.2" fill="#f2f2f2" stroke="#c4c4c4" stroke-width="0.6"/><path d="M1.4 4.4H5" stroke="#c4c4c4" stroke-width="0.6"/></svg>
<div class="t" style="left:42.0px;top:538.4px;font-size:5.35px;color:#b4b4b4;font-weight:normal;transform:scaleX(0.9382);">Fastened 11</div>
<svg class="a" style="left:25.6px;top:548.5px" width="3.4" height="4.8" viewBox="0 0 3.4 4.8"><path d="M0.6 0.4L2.8 2.4L0.6 4.4" fill="none" stroke="#333" stroke-width="1.0"/></svg>
<svg class="a" style="left:34.0px;top:547.9px" width="6.4" height="6.2" viewBox="0 0 6.4 6.2"><path d="M0.6 1.2V3.4A2.6 2.4 0 0 0 5.8 3.4V1.2" fill="#f2f2f2" stroke="#c4c4c4" stroke-width="0.6"/><path d="M1.4 4.4H5" stroke="#c4c4c4" stroke-width="0.6"/></svg>
<div class="t" style="left:42.0px;top:548.8px;font-size:5.35px;color:#b4b4b4;font-weight:normal;transform:scaleX(0.9422);">Fastened 15</div>
<div class="a" style="left:98.4px;top:302px;width:13px;height:15.6px;background:#fff;border:0.6px solid #d4d4d4;border-left:none;border-radius:0 1.5px 1.5px 0"></div>
<svg class="a" style="left:101.2px;top:306.4px" width="7.4" height="7.0" viewBox="0 0 7.4 7"><path d="M0 0.6H1.2M0 3.4H1.2M0 6.2H1.2M2.4 0.6H7.4M2.4 2.4H7.4M2.4 4.4H7.4M2.4 6.2H7.4" stroke="#555" stroke-width="0.7"/></svg>
<div class="a" style="left:0;top:553.2px;width:1024px;height:11.4px;background:#ececec"></div>
<div class="a" style="left:677px;top:553.2px;width:347px;height:11.4px;background:#d5d5d5"></div>
<div class="a" style="left:0;top:564.5px;width:1024px;height:11.5px;background:#eaeaea"></div>
<div class="a" style="left:16px;top:553.2px;width:15.6px;height:11.4px;background:#d9d9d9"></div>
<svg class="a" style="left:4.0px;top:556.6px" width="8.0" height="6.0" viewBox="0 0 8 6"><rect x="0.2" y="0.4" width="5.6" height="3.2" fill="#333"/><circle cx="5.6" cy="3.8" r="1.4" fill="#ececec" stroke="#333" stroke-width="0.7"/><path d="M6.6 4.8L7.8 6" stroke="#333" stroke-width="0.8"/><path d="M0.8 1.4H4.6M0.8 2.6H3.6" stroke="#ececec" stroke-width="0.4"/></svg>
<svg class="a" style="left:19.8px;top:556.2px" width="6.4" height="6.4" viewBox="0 0 6.4 6.4"><path d="M3.2 0.2V6.2M0.2 3.2H6.2" stroke="#222" stroke-width="0.8"/></svg>
<svg class="a" style="left:36.6px;top:555.0px" width="7.0" height="8.4" viewBox="0 0 7 8.4"><path d="M0.5 2.6H3V7.9H0.5Z M3 1.6H6.4V7.9H3Z" fill="none" stroke="#444" stroke-width="0.65"/><path d="M3.6 1.6V0.4H5V1.6" fill="none" stroke="#444" stroke-width="0.55"/></svg>
<div class="t" style="left:44.9px;top:557.3px;font-size:5.40px;color:#555;font-weight:normal;transform:scaleX(0.9945);">Part Studio 1</div>
<div class="a" style="left:112.0px;top:555px;width:0.6px;height:9px;background:#d0d0d0"></div>
<svg class="a" style="left:117.0px;top:555.0px" width="7.0" height="8.4" viewBox="0 0 7 8.4"><path d="M0.5 2.6H3V7.9H0.5Z M3 1.6H6.4V7.9H3Z" fill="none" stroke="#444" stroke-width="0.65"/><path d="M3.6 1.6V0.4H5V1.6" fill="none" stroke="#444" stroke-width="0.55"/></svg>
<div class="t" style="left:125.3px;top:557.3px;font-size:5.40px;color:#555;font-weight:normal;transform:scaleX(0.9945);">Part Studio 2</div>
<div class="a" style="left:192.5px;top:555px;width:0.6px;height:9px;background:#d0d0d0"></div>
<svg class="a" style="left:197.5px;top:555.0px" width="7.0" height="8.4" viewBox="0 0 7 8.4"><path d="M0.5 2.6H3V7.9H0.5Z M3 1.6H6.4V7.9H3Z" fill="none" stroke="#444" stroke-width="0.65"/><path d="M3.6 1.6V0.4H5V1.6" fill="none" stroke="#444" stroke-width="0.55"/></svg>
<div class="t" style="left:205.8px;top:557.3px;font-size:5.40px;color:#555;font-weight:normal;transform:scaleX(0.9950);">Part Studio 2 Copy 1</div>
<div class="a" style="left:273.0px;top:555px;width:0.6px;height:9px;background:#d0d0d0"></div>
<svg class="a" style="left:278.0px;top:555.0px" width="7.0" height="8.4" viewBox="0 0 7 8.4"><path d="M0.5 2.6H3V7.9H0.5Z M3 1.6H6.4V7.9H3Z" fill="none" stroke="#444" stroke-width="0.65"/><path d="M3.6 1.6V0.4H5V1.6" fill="none" stroke="#444" stroke-width="0.55"/></svg>
<div class="t" style="left:286.3px;top:557.3px;font-size:5.40px;color:#555;font-weight:normal;transform:scaleX(0.9945);">Part Studio 3</div>
<div class="a" style="left:353.5px;top:555px;width:0.6px;height:9px;background:#d0d0d0"></div>
<svg class="a" style="left:358.5px;top:555.0px" width="7.0" height="8.4" viewBox="0 0 7 8.4"><path d="M0.5 2.6H3V7.9H0.5Z M3 1.6H6.4V7.9H3Z" fill="none" stroke="#444" stroke-width="0.65"/><path d="M3.6 1.6V0.4H5V1.6" fill="none" stroke="#444" stroke-width="0.55"/></svg>
<div class="t" style="left:366.8px;top:557.3px;font-size:5.40px;color:#555;font-weight:normal;transform:scaleX(0.9945);">Part Studio 4</div>
<div class="a" style="left:434.0px;top:555px;width:0.6px;height:9px;background:#d0d0d0"></div>
<svg class="a" style="left:439.0px;top:555.0px" width="7.0" height="8.4" viewBox="0 0 7 8.4"><path d="M0.5 2.6H3V7.9H0.5Z M3 1.6H6.4V7.9H3Z" fill="none" stroke="#444" stroke-width="0.65"/><path d="M3.6 1.6V0.4H5V1.6" fill="none" stroke="#444" stroke-width="0.55"/></svg>
<div class="t" style="left:447.3px;top:557.3px;font-size:5.40px;color:#555;font-weight:normal;transform:scaleX(0.9945);">Part Studio 5</div>
<div class="a" style="left:596.3px;top:555px;width:0.6px;height:9px;background:#d0d0d0"></div>
<svg class="a" style="left:601.3px;top:555.0px" width="7.0" height="8.4" viewBox="0 0 7 8.4"><path d="M0.5 2.6H3V7.9H0.5Z M3 1.6H6.4V7.9H3Z" fill="none" stroke="#444" stroke-width="0.65"/><path d="M3.6 1.6V0.4H5V1.6" fill="none" stroke="#444" stroke-width="0.55"/></svg>
<div class="t" style="left:609.6px;top:557.3px;font-size:5.40px;color:#555;font-weight:normal;transform:scaleX(1.0105);">Part Studio 6</div>
<div class="a" style="left:516.3px;top:553.2px;width:80px;height:11.2px;background:#fff;border-bottom:0.6px solid #b8b8b8"></div>
<svg class="a" style="left:520.4px;top:556.0px" width="6.6" height="6.8" viewBox="0 0 6.6 6.8"><rect x="0.4" y="0.4" width="5.6" height="6" rx="0.6" fill="none" stroke="#333" stroke-width="0.7"/><rect x="1.4" y="1.4" width="3" height="3" fill="#555"/><path d="M1.4 5.4H5" stroke="#555" stroke-width="0.5"/></svg>
<div class="t" style="left:529.6px;top:557.5px;font-size:5.40px;color:#222;font-weight:normal;transform:scaleX(1.0224);">Assembly 1</div>
<svg class="a" style="left:984.4px;top:545.6px" width="7.4" height="5.6" viewBox="0 0 7.4 5.6"><path d="M0.4 3.4H5.6V5.2H0.4Z" fill="#aaa" stroke="#555" stroke-width="0.6"/><path d="M2.4 3.4V1.8A1.6 1.2 0 0 1 5.6 1.8H6.8V3.2" fill="none" stroke="#555" stroke-width="0.7"/></svg>
<svg class="a" style="left:998.0px;top:545.4px" width="8.0" height="5.8" viewBox="0 0 8 5.8"><path d="M0.5 5.4V3.4A3.5 3 0 0 1 7.5 3.4V5.4H5.6V4.2A1.6 1.4 0 0 0 2.4 4.2V5.4Z" fill="#999" stroke="#555" stroke-width="0.6"/></svg>
<svg class="a" style="left:1012.8px;top:545.0px" width="6.4" height="6.4" viewBox="0 0 6.4 6.4"><rect x="1" y="0.4" width="4.4" height="4" fill="#999" stroke="#555" stroke-width="0.5"/><path d="M0.2 5.2H6.2M0.6 6H5.8" stroke="#555" stroke-width="0.6"/></svg>
<div class="a" style="left:1011px;top:270px;width:13px;height:78.6px;background:#fff;border:0.6px solid #dadada;border-right:none"></div>
<div class="a" style="left:1011px;top:283.1px;width:13px;height:0.5px;background:#dedede"></div>
<div class="a" style="left:1011px;top:296.2px;width:13px;height:0.5px;background:#dedede"></div>
<div class="a" style="left:1011px;top:309.3px;width:13px;height:0.5px;background:#dedede"></div>
<div class="a" style="left:1011px;top:322.4px;width:13px;height:0.5px;background:#dedede"></div>
<div class="a" style="left:1011px;top:335.5px;width:13px;height:0.5px;background:#dedede"></div>
<svg class="a" style="left:1014.0px;top:273.2px" width="7.0" height="6.8" viewBox="0 0 7 6.8"><rect x="0.4" y="0.4" width="6.2" height="6" fill="#ddd" stroke="#888" stroke-width="0.6"/><rect x="1.6" y="1.6" width="3.6" height="3.4" fill="#555"/></svg>
<svg class="a" style="left:1014.0px;top:285.8px" width="7.4" height="7.6" viewBox="0 0 7.4 7.6"><path d="M2.4 3.4L4.8 2.4L7 3.4V6L4.8 7.2L2.4 6Z M2.4 3.4L4.8 4.4L7 3.4M4.8 4.4V7.2" fill="#fff" stroke="#444" stroke-width="0.6"/><rect x="0.2" y="0.4" width="3.4" height="3" fill="#3a6ab0"/></svg>
<svg class="a" style="left:1014.0px;top:299.2px" width="7.4" height="7.4" viewBox="0 0 7.4 7.4"><rect x="0.4" y="0.4" width="2" height="2" fill="#8aa"/><rect x="2.8" y="3" width="4" height="3.6" fill="#ddd" stroke="#888" stroke-width="0.6"/><path d="M1.4 2.6L3 4" stroke="#888" stroke-width="0.6"/></svg>
<svg class="a" style="left:1014.0px;top:312.4px" width="7.4" height="7.4" viewBox="0 0 7.4 7.4"><path d="M0.6 6.6H6.6V0.8H3.8V3.8H0.6Z" fill="#fff" stroke="#555" stroke-width="0.6"/><path d="M0.6 5H6.6" stroke="#6a8ab8" stroke-width="0.8"/></svg>
<svg class="a" style="left:1014.6px;top:325.8px" width="6.4" height="6.4" viewBox="0 0 6.4 6.4"><circle cx="3.2" cy="3.2" r="2.8" fill="#2a62a8"/><path d="M1.4 2A2.6 2.6 0 0 1 4.6 1.2L3.4 3.2Z" fill="#8ab8e8"/></svg>
<div class="t" style="left:1013.6px;top:339.8px;font-size:5.60px;color:#222;font-weight:bold;">(x)</div>
<svg class="a" style="left:1013.2px;top:338.4px" width="3.0" height="3.6" viewBox="0 0 3 3.6"><rect x="0.3" y="0.3" width="2.2" height="2.8" fill="none" stroke="#222" stroke-width="0.6"/></svg>
<svg class="a" style="left:0;top:0" width="1024" height="150" viewBox="0 0 1024 150"><path d="M968 88 Q972 83.5 979.5 81.6" fill="none" stroke="#e4e4e4" stroke-width="1.2"/><path d="M996.5 81.6 Q1004 83.5 1008 88" fill="none" stroke="#e4e4e4" stroke-width="1.2"/><path d="M966.4 90.2L967.2 86.4L970 88.8Z" fill="#e0e0e0"/><path d="M1009.6 90.2L1008.8 86.4L1006 88.8Z" fill="#e0e0e0"/><path d="M988 77.4L990.8 80.8H985.2Z" fill="#e2e2e2"/><path d="M988 136.2L990.8 132.8H985.2Z" fill="#e2e2e2"/><path d="M958.4 107.2L961.6 104.6V109.8Z" fill="#e2e2e2"/><path d="M1017.6 107.2L1014.4 104.6V109.8Z" fill="#e2e2e2"/><rect x="973.8" y="96.4" width="16.2" height="20.2" rx="2.6" fill="#fdfdfd" stroke="#e6e8f0" stroke-width="1.2"/><rect x="990.6" y="95.8" width="13.2" height="20.6" rx="2.6" fill="#fcfcfc" stroke="#e6e8f0" stroke-width="1.2"/><path d="M976 96 L979 94.6 H1001 L1003 96" fill="none" stroke="#ececf2" stroke-width="0.9"/><path d="M971.3 95.8V119.3" stroke="#5a5aa8" stroke-width="0.7"/><path d="M971.3 119.3H974" stroke="#555" stroke-width="0.7"/><path d="M974 119.3L993 120.3" stroke="#e89090" stroke-width="0.7"/></svg>
<div class="t" style="left:969.8px;top:90.3px;font-size:4.60px;color:#3a3a7a;font-weight:bold;">Z</div>
<div class="t" style="left:977.2px;top:106.1px;font-size:4.60px;color:#444;font-weight:normal;transform:scaleX(0.8943);">Front</div>
<div class="t" style="left:994.8px;top:106.0px;font-size:3.80px;color:#666;font-weight:normal;transform:scaleX(0.6761);">Right</div>
<div class="t" style="left:993.4px;top:119.5px;font-size:4.60px;color:#c83030;font-weight:bold;">X</div>
<svg class="a" style="left:1002.2px;top:129.8px" width="7.0" height="7.0" viewBox="0 0 7 7"><path d="M0.6 2L3.4 0.8L6.2 2V5L3.4 6.4L0.6 5Z" fill="#999" stroke="#666" stroke-width="0.5"/><path d="M0.6 2L3.4 3.2L6.2 2M3.4 3.2V6.4" fill="none" stroke="#ddd" stroke-width="0.5"/></svg>
<svg class="a" style="left:1012.8px;top:132.4px" width="3.2" height="2.0" viewBox="0 0 3.2 2"><path d="M0 0H3.2L1.6 2Z" fill="#444"/></svg>
<div class="a" style="left:1022.6px;top:128px;width:0.6px;height:9px;background:#d8d8d8"></div>
<svg class="a" style="left:416.6px;top:536.4px" width="5.0" height="8.0" viewBox="0 0 5 8"><path d="M0.4 0.4V6.2L1.8 4.8L2.8 7.2L3.6 6.8L2.6 4.6H4.4Z" fill="#fff" stroke="#555" stroke-width="0.5"/></svg>
</div></body></html>
